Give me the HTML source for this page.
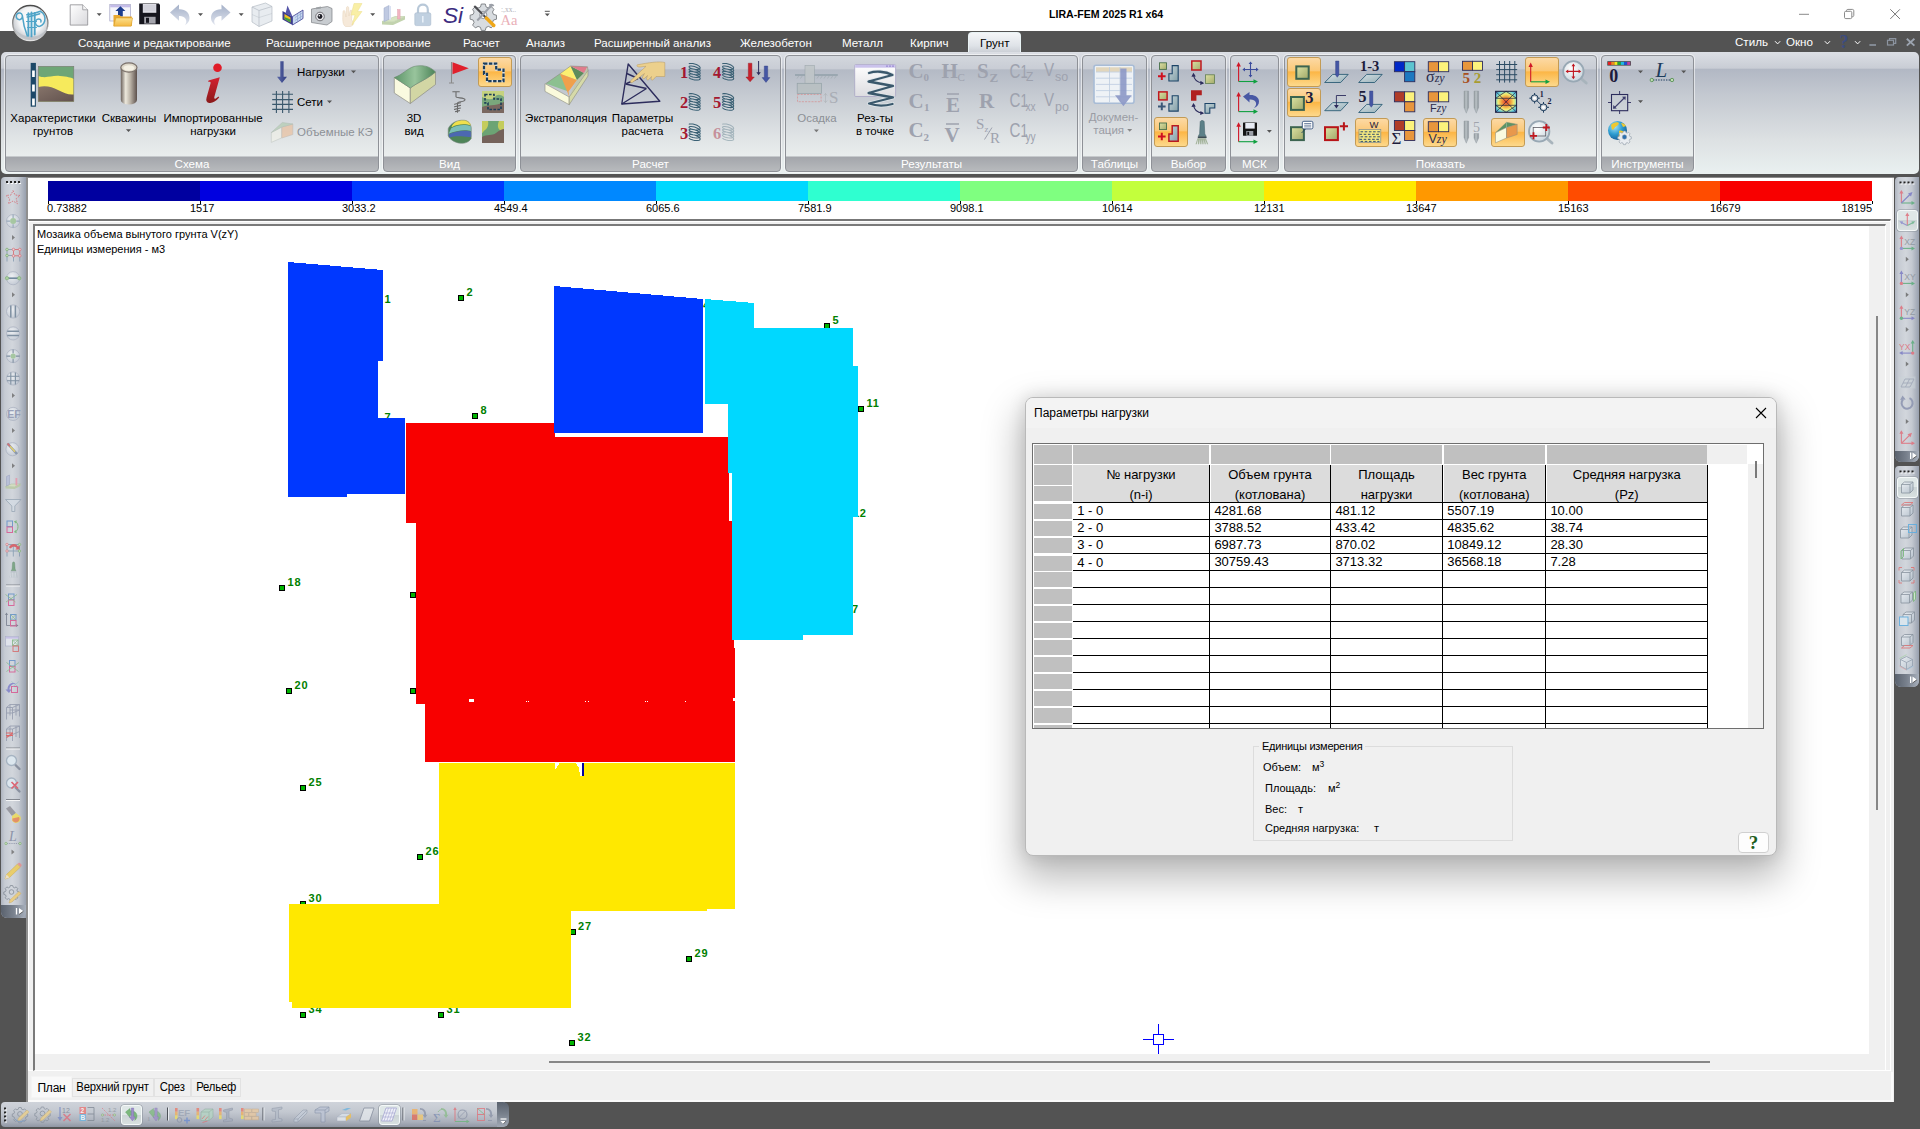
<!DOCTYPE html>
<html lang="ru">
<head>
<meta charset="utf-8">
<title>LIRA-FEM 2025 R1 x64</title>
<style>
*{box-sizing:border-box;margin:0;padding:0}
html,body{width:1920px;height:1129px;overflow:hidden;background:#535353}
body{position:relative;font-family:"Liberation Sans",sans-serif;font-size:12px;color:#000}
.abs{position:absolute}
/* title bar */
#titlebar{position:absolute;left:0;top:0;width:1920px;height:31px;background:#fff}
#apptitle{position:absolute;left:1049px;top:8px;width:116px;font:bold 10.6px "Liberation Sans",sans-serif;white-space:nowrap;letter-spacing:0}
/* menu */
#menubar{position:absolute;left:0;top:31px;width:1920px;height:22px;background:#535353}
.mt{position:absolute;top:5px;color:#fff;font-size:11.6px;white-space:nowrap;line-height:14px}
/* ribbon */
#ribbon{position:absolute;left:1px;top:52px;width:1918px;height:121.5px;border-radius:5px;background:linear-gradient(#dcdfe5 0,#c9cdd5 16px,#b2b8c4 17.5px,#c3c8d0 42px,#dde1e3 88px,#e9f0f0 121px);}
.grp{position:absolute;top:3px;height:117px;border:1px solid #8e9197;border-radius:4px;background:linear-gradient(#d3d7dd 0,#c9cdd5 12.500px,#b4bac5 14px,#c6cbd2 40px,#dfe3e5 80px,#e9eded 100px,#a3a6ab 101px,#b9bbbe 116px);box-shadow:0 0 0 1px rgba(255,255,255,.55)}
.grp .gl{position:absolute;left:0;right:0;bottom:0;height:15px;line-height:15px;text-align:center;color:#fff;font-size:11.6px}
.rt{position:absolute;font-size:11.5px;line-height:13px;text-align:center;white-space:nowrap;color:#000}
.rt.dis{color:#8c9096}
.act{position:absolute;border:1px solid #c39b55;border-radius:3px;background:linear-gradient(#fcd9a4 0,#fbc877 45%,#fcb646 50%,#fdd98c 100%)}
/* color scale */
#main{position:absolute;left:26px;top:177px;width:1868px;height:925px;background:#f0f0f0;border-left:2px solid #8f8f8f;border-top:1px solid #8a8a8a}
#scale{position:absolute;left:28px;top:178px;width:1864px;height:41px;background:#fff}
.sl{position:absolute;top:24px;font-size:11px;line-height:12px;white-space:nowrap}
/* canvas */
#canvas{position:absolute;left:35px;top:226px;width:1834px;height:828px;background:#fff;overflow:hidden}

#frame{position:absolute;left:28px;top:219px;width:1863px;height:852px;background:#f0f0f0;border-top:2px solid #777;border-left:1px solid #fff;border-right:1px solid #fff;border-bottom:1px solid #fff;box-shadow:inset 0 1px 0 0 #fff}
#frame2{position:absolute;left:33px;top:224px;width:1853px;height:847px;background:#f0f0f0;border-left:2px solid #7a7a7a;border-top:2px solid #7a7a7a;border-right:1px solid #fff;border-bottom:1px solid #fff}
#tabs{position:absolute;left:28px;top:1072px;width:1865px;height:30px;background:#f0f0f0;border-bottom:2px solid #fafafa;border-right:2px solid #fafafa}
.tab{position:absolute;top:6px;height:19px;border:1px solid #e2e2e2;font-size:12px;line-height:17px;padding:0 0;text-align:center;white-space:nowrap;letter-spacing:-0.2px}
.tab.sel{top:4px;height:22px;background:#f9f9f9;border-color:#f4f4f4;line-height:22px}
#ltool{position:absolute;left:1px;top:177px;width:25px;height:741px;border-radius:4px 0 0 6px;background:linear-gradient(90deg,#aeb4bf 0,#c6cbd3 15%,#d2d6dc 45%,#c4c9d1 70%,#98a0ae 100%)}
#btool{position:absolute;left:1px;top:1102px;width:507px;height:25px;border-radius:4px 6px 6px 4px;background:linear-gradient(#cfd3da 0,#c3c8d0 40%,#a9afba 80%,#8f96a3 100%)}
.rtool{position:absolute;left:1895px;width:24px;border-radius:4px 0 0 4px;background:linear-gradient(90deg,#aeb4bf 0,#c6cbd3 15%,#d2d6dc 45%,#c4c9d1 70%,#98a0ae 100%)}
.vscroll{position:absolute;left:1876px;top:316px;width:2px;height:494px;background:#868686}
.hscroll{position:absolute;left:549px;top:1061px;width:1161px;height:2px;background:#868686}
.grip{position:absolute;height:2px;background-image:repeating-linear-gradient(90deg,#222 0,#222 2px,transparent 2px,transparent 4px)}

#dlg{position:absolute;left:1025px;top:397px;width:752px;height:459px;border-radius:8px;background:#f0f0f0;border:1px solid #b9b9b9;box-shadow:0 18px 38px 5px rgba(0,0,0,.27),0 0 16px 2px rgba(0,0,0,.10);overflow:hidden}
#dlg .ttl{position:absolute;left:0;top:0;width:100%;height:30px;background:#f3f3f3}
#dlg .ttl span{position:absolute;left:8px;top:8px;font-size:12px;line-height:14px}
#grid{position:absolute;left:6px;top:45px;width:732px;height:286px;border:1px solid #6e6e6e;background:#fff;overflow:hidden}
#grid .c{position:absolute;background:#c0c0c0}
#grid .h{position:absolute;background:#dcdcdc;border-right:1px solid #000;font-size:13px;line-height:20px;text-align:center;white-space:nowrap;padding-top:0}
#grid .hl{position:absolute;background:#000;height:1px;left:40px;width:635px}
#grid .vl{position:absolute;background:#000;width:1px;top:58px;height:230px}
#grid .t{position:absolute;font-size:13px;line-height:15px;white-space:nowrap}
#gb{position:absolute;left:227px;top:348px;width:260px;height:95px;border:1px solid #dcdcdc}
#gb .cap{position:absolute;left:5px;top:-8px;background:#f0f0f0;padding:0 3px;font-size:11px;letter-spacing:-0.25px;line-height:14px;white-space:nowrap}
#gb .r{position:absolute;font-size:11px;line-height:14px;white-space:nowrap}
#gb sup{font-size:8.5px;line-height:0;vertical-align:4px}
#helpb{position:absolute;left:712px;top:434px;width:31px;height:21px;border:1px solid #d0d0d0;border-radius:4px;background:#fdfdfd;text-align:center;font:bold 19px/20px "Liberation Serif",serif;color:#1c5e1c}
.tab span{display:inline-block;transform:scaleX(.94);transform-origin:50% 50%}
</style>
</head>
<body>
<div id="titlebar">
  <div id="apptitle">LIRA-FEM 2025 R1 x64</div>
</div>
<div id="menubar">
  <div class="mt" style="left:78px">Создание и редактирование</div>
  <div class="mt" style="left:266px">Расширенное редактирование</div>
  <div class="mt" style="left:463px">Расчет</div>
  <div class="mt" style="left:526px">Анализ</div>
  <div class="mt" style="left:594px">Расширенный анализ</div>
  <div class="mt" style="left:740px">Железобетон</div>
  <div class="mt" style="left:842px">Металл</div>
  <div class="mt" style="left:910px">Кирпич</div>
  <div id="acttab" style="position:absolute;left:968px;top:1px;width:53px;height:22px;border-radius:4px 4px 0 0;background:linear-gradient(#f4f6f8,#dfe3e8 60%,#c6cad1);border:1px solid #e9f3f5;border-bottom:none"></div>
  <div class="mt" style="left:980px;color:#000">Грунт</div>
  <div class="mt" style="left:1735px;top:4px">Стиль</div>
  <div class="mt" style="left:1786px;top:4px">Окно</div>
</div>
<div id="ribbon">
  <div class="grp" style="left:4px;width:374px"><div class="gl">Схема</div></div>
  <div class="grp" style="left:382px;width:133px"><div class="gl">Вид</div></div>
  <div class="grp" style="left:519px;width:261px"><div class="gl">Расчет</div></div>
  <div class="grp" style="left:784px;width:293px"><div class="gl">Результаты</div></div>
  <div class="grp" style="left:1081px;width:65px"><div class="gl">Таблицы</div></div>
  <div class="grp" style="left:1150px;width:75px"><div class="gl">Выбор</div></div>
  <div class="grp" style="left:1229px;width:49px"><div class="gl">МСК</div></div>
  <div class="grp" style="left:1283px;width:313px"><div class="gl">Показать</div></div>
  <div class="grp" style="left:1600px;width:93px"><div class="gl">Инструменты</div></div>
</div>
<!--RIB1--><div id="ov" style="position:absolute;left:0;top:0;width:1920px;height:177px;pointer-events:none">
<!-- ===== Схема ===== -->
<div class="rt" style="left:10px;top:111.6px;width:86px;line-height:13px">Характеристики<br>грунтов</div>
<div class="rt" style="left:101px;top:111.6px;width:56px">Скважины</div>
<div class="rt" style="left:160px;top:111.6px;width:106px;line-height:13px">Импортированные<br>нагрузки</div>
<div class="rt" style="left:297px;top:65.5px;text-align:left">Нагрузки</div>
<div class="rt" style="left:297px;top:95.5px;text-align:left">Сети</div>
<div class="rt dis" style="left:297px;top:125.5px;text-align:left">Объемные КЭ</div>
<svg class="abs" style="left:0;top:52px" width="380" height="105" viewBox="0 52 380 105">
 <defs>
  <linearGradient id="gcyl" x1="0" x2="1"><stop offset="0" stop-color="#6c625c"/><stop offset=".3" stop-color="#ece8dc"/><stop offset=".6" stop-color="#b8b0a4"/><stop offset="1" stop-color="#5c504c"/></linearGradient>
  <linearGradient id="gbrown" x1="0" y1="0" x2="1" y2="1"><stop offset="0" stop-color="#86746a"/><stop offset="1" stop-color="#62524e"/></linearGradient>
  <linearGradient id="gred" x1="0" y1="0" x2="0" y2="1"><stop offset="0" stop-color="#d42030"/><stop offset="1" stop-color="#8a1a1a"/></linearGradient>
  <linearGradient id="garr" x1="0" x2="1"><stop offset="0" stop-color="#5a68a8"/><stop offset="1" stop-color="#303c80"/></linearGradient>
 </defs>
 <!-- soil characteristics -->
 <rect x="30.7" y="62.9" width="5.2" height="43.8" fill="#1c4868"/>
 <rect x="32.1" y="70.5" width="2.7" height="6.5" fill="#fff"/><rect x="32.1" y="84.5" width="2.7" height="7" fill="#fff"/><rect x="32.1" y="98.5" width="2.7" height="7" fill="#fff"/>
 <rect x="38.3" y="66.3" width="35.5" height="35.2" fill="#6ea676"/>
 <path d="M38.3 76 C46 79 52 75 60 76 S70 77 73.8 79 V101.5 H38.3Z" fill="#f6ea5c"/>
 <path d="M38.3 87 C46 85 52 87 58 90 S68 95 73.8 94.5 V101.5 H38.3Z" fill="url(#gbrown)"/>
 <rect x="38.3" y="66.3" width="35.5" height="35.2" fill="none" stroke="#7a7a72" stroke-width=".6"/>
 <!-- cylinder -->
 <path d="M120.8 67.5 V100 A8.1 4.6 0 0 0 137 100 V67.5Z" fill="url(#gcyl)"/>
 <ellipse cx="128.9" cy="67.5" rx="8.1" ry="4.6" fill="#dcd6c8" stroke="#7a706a" stroke-width="1.2"/>
 <ellipse cx="128.9" cy="68" rx="5.6" ry="2.8" fill="#f4f0e4"/>
 <path d="M125.9 129.3h5.2l-2.6 2.8z" fill="#555"/>
 <!-- i -->
 <circle cx="217.5" cy="67.7" r="4.3" fill="#e01c28"/>
 <path d="M208.5 80.5 L219.8 77.3 L214.3 97 Q213.8 99.3 215.8 98.5 L218.5 96.5 L219.2 97.6 Q214 103.6 209.3 103 Q205.3 102.3 206.6 97.4 L210.6 83.2 Q210.9 81.8 209.6 81.8 L208.3 81.9Z" fill="url(#gred)"/>
 <!-- loads arrow -->
 <path d="M280.3 61.2h3.3v15.6h3.4l-5 6.2l-5-6.2h3.3z" fill="url(#garr)"/>
 <path d="M351 70.6h5l-2.5 2.7z" fill="#555"/>
 <!-- grid -->
 <g stroke="#3a586c" stroke-width="1.1" fill="none"><path d="M276.4 91v22M282.6 91v22M288.9 91v22M272.2 94.2h20.8M272.2 99.6h20.8M272.2 104.4h20.8M272.2 109.4h20.8"/></g>
 <path d="M327 100.6h5l-2.5 2.7z" fill="#555"/>
 <!-- volume FE (disabled) -->
 <g opacity=".55"><path d="M271.3 132.5l10.5-5.5l0 10.8l-10.5 4.6z" fill="#f4f4e8" stroke="#a8b0a8" stroke-width=".6"/><path d="M281.8 127l11-3v10.5l-11 3.5z" fill="#eeb88c" stroke="#b0a090" stroke-width=".6"/><path d="M271.3 132.5l11-10l10.5 1.5l-11 3z" fill="#a8c8a4" stroke="#98a898" stroke-width=".6"/></g>
</svg>
<!-- ===== Вид ===== -->
<div class="rt" style="left:394px;top:111.6px;width:40px;line-height:13px">3D<br>вид</div>
<div class="act" style="left:478px;top:57px;width:34px;height:30px"></div>
<svg class="abs" style="left:380px;top:52px" width="140" height="105" viewBox="380 52 140 105">
 <defs>
  <linearGradient id="gtop" x1="0" y1="0" x2="1" y2="0"><stop offset="0" stop-color="#5c9468"/><stop offset=".5" stop-color="#98c49c"/><stop offset="1" stop-color="#4c8458"/></linearGradient>
 </defs>
 <!-- 3D block -->
 <path d="M394.3 77.5 L410.3 88 V103.5 L394.3 93Z" fill="#fafae0" stroke="#8c8c84" stroke-width=".7"/>
 <path d="M410.3 88 C418 82 426 80 435.5 72 V84.5 L410.3 103.5Z" fill="#d2d6a4" stroke="#8c8c84" stroke-width=".7"/>
 <path d="M394.3 77.5 C402 75 408 68 414 66.5 C422 64.5 430 66 435.5 72 C426 80 418 82 410.3 88Z" fill="url(#gtop)" stroke="#6c8c70" stroke-width=".6"/>
 <!-- flag -->
 <path d="M451.5 62v21" stroke="#8a8a8a" stroke-width="1.1"/><path d="M449 83h5" stroke="#8a8a8a" stroke-width="1"/>
 <path d="M452.5 62.3 L468.8 68.3 L452.5 74.3Z" fill="#e0202c"/>
 <!-- auger -->
 <g stroke="#6a6a6a" stroke-width="1.1" fill="none" stroke-linecap="round"><path d="M452.8 91.800h6.500M456 91.800v5c0 1.600 9 .4 9 3s-7.500 1.400-7.500 3.400v9"/><path d="M454.500 104.200l6-1.400M454.500 106.800l6-1.400M454.500 109.400l6-1.400M455.500 111.600l4-1"/></g>
 <!-- soil stack -->
 <g transform="translate(-19.800,-12.300)">
 <path d="M468 141 C470 136 476 132 484 132.500 C488 133 490.500 136 491 140 V151 C488 155 484 156 480 155.500 C474 155 469 151 468 148Z" fill="#4e8458"/>
 <path d="M471 140.500 C478 136.500 486 137 491 138.500 V143.500 C486 141.500 476 142.500 468.500 146Z" fill="#7cc0b8"/>
 <path d="M468.500 146.500 C476 143 486 142 491 144 V149 C486 150 478 147 469 150Z" fill="#4c68b0"/>
 <path d="M471.500 138.500 C474 134 478 132 484 132.300 C488 132.600 490.500 135 490.800 138 C486 136 478 136 471.500 139.500Z" fill="#f0e04c"/>
 <path d="M468 141 C470 136 476 132 484 132.500 C488 133 490.500 136 491 140 V151 C488 155 484 156 480 155.500 C474 155 469 151 468 148Z" fill="none" stroke="#7c8c84" stroke-width=".6"/>
 </g>
 <!-- contour active -->
 <path d="M484 63.600h12.200v6h7.300v11.600h-16.500v-7.300h-3z" fill="none" stroke="#d4dce4" stroke-width="2.200"/>
 <path d="M484 63.600h12.200v6h7.300v11.600h-16.500v-7.300h-3z" fill="none" stroke="#1c3c58" stroke-width="2.200" stroke-dasharray="3.400 1.500" stroke-linejoin="miter"/>
 <g transform="translate(0,-2)"><!-- contour on soil -->
 <rect x="482" y="93" width="22" height="22" fill="#7aa87c"/>
 <path d="M482 93h22v6c-4-3-7-3-9 0s-8 3-13 0z" fill="#d8dc80" opacity=".8"/>
 <path d="M482 109c6-3 12 0 22-5v11h-22z" fill="#7a6860"/>
 <g fill="none" stroke="#1c3c58" stroke-width="1.6" stroke-dasharray="2.6 1.4"><path d="M485 96.500h9v4.500h7v10.500h-13v-6.500h-3z"/></g>
 <!-- soil map -->
 <rect x="482" y="123" width="22" height="22" fill="#6ca474"/>
 <path d="M482 123h6c1 4-1 8-3 9s-2 3-3 3z" fill="#c4cc5c"/><path d="M504 123h-5c-2 4-1 8 1 9s3 2 4 2z" fill="#c4cc5c"/>
 <path d="M482 139c5-3 10-1 14-4s6-4 8-4v14h-22z" fill="#74625a"/>
</g>
</svg>
<!-- ===== Расчет ===== -->
<div class="rt" style="left:524px;top:111.6px;width:84px">Экстраполяция</div>
<div class="rt" style="left:611px;top:111.6px;width:63px;line-height:13px">Параметры<br>расчета</div>
<svg class="abs" style="left:518px;top:52px" width="264" height="105" viewBox="518 52 264 105">
 <!-- extrapolation -->
 <path d="M545 83.600L569.200 97V104.700L545 91.400Z" fill="#fafadc" stroke="#8c8c80" stroke-width=".6"/>
 <path d="M569.200 97L588 70.300V76L569.200 104.700Z" fill="#d6daa8" stroke="#8c8c80" stroke-width=".6"/>
 <path d="M545.800 83.600L560 73.800L568.500 91.400Z" fill="#8cc090"/>
 <path d="M560 73.800L570.500 66L577 80Z" fill="#fcf070"/>
 <path d="M560 73.800L577 80L568.500 91.400L569.200 96.500Z" fill="#f0a04c"/>
 <path d="M570.500 66L577 80L584 73Z" fill="#5c8c5c"/>
 <path d="M570.500 66L587.500 66.800L584 73Z" fill="#e07c8c"/>
 <path d="M577 80L584 73L587.500 66.800L588 70.300L569.200 97Z" fill="#c4cc94" opacity=".5"/>
 <path d="M545.800 83.600L560 73.800L570.500 66L587.500 66.800L588 70.300" fill="none" stroke="#8c8c80" stroke-width=".6"/>
 <!-- params: truss + hand -->
 <g fill="none" stroke="#2c2c5c" stroke-width="1.4" stroke-linejoin="round"><path d="M628.200 64L621.800 104L659.800 101.200Z"/><path d="M626.800 73.500L638 78.500M625.500 84L646.500 88.500M621.800 104L646.500 88.500M638 78.500L625.500 84"/></g>
 <path d="M664.800 62.500 C659 61 648 62.800 637.500 64.800 C636 65.800 637.500 67.200 640 67 L646 66.300 L630.500 80.800 C629.500 82.200 631.200 83.200 632.700 82.200 L644.500 73.500 L642.500 77 C642 78.600 644 79.300 645 78 L647.500 75.500 L646.500 78.500 C646.300 80 648.300 80.500 649.200 79.200 L651.500 76.500 L651 79 C651 80.300 652.800 80.500 653.600 79.300 L656 76.500 L664.800 76.500Z" fill="#ecd08c" stroke="#b8985c" stroke-width=".5"/>
 <!-- numbered springs -->
 <g font-family="Liberation Serif, serif" font-weight="bold" font-size="16.500" fill="#a41830">
  <text x="680" y="78">1</text><text x="680" y="108.200">2</text><text x="680" y="138.500">3</text>
  <text x="713" y="78">4</text><text x="713" y="108.200">5</text><text x="713" y="138.500" opacity=".4">6</text>
 </g>
 <g fill="none" stroke="#3a6074" stroke-width="1.05" stroke-linejoin="round">
  <g id="spr"><path d="M689.0 64.1 L689.3 63.6 L690.1 63.4 L691.3 63.4 L692.9 63.5 L694.6 64.0 L696.3 64.6 L697.9 65.3 L699.1 66.2 L699.9 67.1 L700.2 67.9 L699.9 68.6 L699.1 69.1 L697.9 69.4 L696.3 69.4 L694.6 69.3 L692.9 68.9 L691.3 68.5 L690.1 67.9 L689.3 67.3 L689.0 66.7 L689.3 66.3 L690.1 66.1 L691.3 66.0 L692.9 66.2 L694.6 66.6 L696.3 67.2 L697.9 68.0 L699.1 68.8 L699.9 69.7 L700.2 70.5 L699.9 71.2 L699.1 71.7 L697.9 72.0 L696.3 72.1 L694.6 72.0 L692.9 71.6 L691.3 71.1 L690.1 70.5 L689.3 69.9 L689.0 69.4 L689.3 69.0 L690.1 68.7 L691.3 68.7 L692.9 68.9 L694.6 69.3 L696.3 69.9 L697.9 70.7 L699.1 71.5 L699.9 72.4 L700.2 73.2 L699.9 73.9 L699.1 74.4 L697.9 74.7 L696.3 74.8 L694.6 74.6 L692.9 74.3 L691.3 73.8 L690.1 73.2 L689.3 72.6 L689.0 72.0 L689.3 71.6 L690.1 71.4 L691.3 71.3 L692.9 71.5 L694.6 71.9 L696.3 72.6 L697.9 73.3 L699.1 74.2 L699.9 75.0 L700.2 75.8 L699.9 76.5 L699.1 77.0 L697.9 77.4 L696.3 77.4 L694.6 77.3 L692.9 76.9 L691.3 76.4 L690.1 75.9 L689.3 75.3 L689.0 74.7 L689.3 74.3 L690.1 74.0 L691.3 74.0 L692.9 74.2 L694.6 74.6 L696.3 75.2 L697.9 76.0 L699.1 76.8 L699.9 77.7 L700.2 78.5 L699.9 79.2 L699.1 79.7 L697.9 80.0 L696.3 80.1 L694.6 79.9 L692.9 79.6 L691.3 79.1 L690.1 78.5 L689.3 77.9 L689.0 77.4"/></g>
  <use href="#spr" y="30.200"/><use href="#spr" y="60.500"/><use href="#spr" x="33.500"/><use href="#spr" x="33.500" y="30.200"/><use href="#spr" x="33.500" y="60.500" opacity=".35"/>
 </g>
 <!-- arrows -->
 <path d="M748.300 63.200h3.600v13.800h2.400l-4.200 4.800l-4.200-4.800h2.400z" fill="#c8202c" stroke="#901820" stroke-width=".4"/>
 <path d="M758.600 61v12" stroke="#2c2c5c" stroke-width="1"/><path d="M756.400 72.300h4.400l-2.200 3z" fill="#2c2c5c"/>
 <path d="M764.300 66h3.400v11.600h2.200l-3.900 4.800l-3.900-4.800h2.200z" fill="#4456a4" stroke="#303c80" stroke-width=".4"/>
</svg>
</div>
<!--/RIB1-->
<!--RIB2--><div id="ov2" style="position:absolute;left:0;top:0;width:1920px;height:177px;pointer-events:none">
<!-- ===== Результаты ===== -->
<div class="rt dis" style="left:797px;top:111.6px;width:40px">Осадка</div>
<div class="rt" style="left:853px;top:111.6px;width:44px">Рез-ты<br>в точке</div>
<svg class="abs" style="left:782px;top:52px" width="298" height="105" viewBox="782 52 298 105">
 <defs>
  <linearGradient id="gwin" x1="0" y1="0" x2="0" y2="1"><stop offset="0" stop-color="#ffffff"/><stop offset="1" stop-color="#dcdce0"/></linearGradient>
 </defs>
 <!-- settlement (disabled) -->
 <g opacity=".85">
 <rect x="805" y="65.300" width="9.400" height="18" fill="#c0c6c8" stroke="#98a4a8" stroke-width=".6"/>
 <path d="M795 75h10M814.400 75h23.400" stroke="#8c9ca4" stroke-width="1.300"/>
 <path d="M797 78.500l2-3M800.500 78.500l2-3M817 78.500l2-3M820.500 78.500l2-3M824 78.500l2-3M827.500 78.500l2-3M831 78.500l2-3M834.500 78.500l2-3" stroke="#98a4a8" stroke-width=".6"/>
 <rect x="797.200" y="83.300" width="24.200" height="10.100" fill="#b8c0c2" stroke="#8c9ca0" stroke-width=".7"/>
 <rect x="797.500" y="94.500" width="23.600" height="7.200" fill="none" stroke="#d88c8c" stroke-width=".8" stroke-dasharray="2 1.200"/>
 <path d="M825.500 93.500v9M823.800 95.500l1.700-2l1.700 2M823.800 100.500l1.700 2l1.700-2" stroke="#a8acb0" stroke-width=".6" fill="none"/>
 <text x="829" y="102.800" font-family="Liberation Serif, serif" font-size="17" fill="#a4a8b0">S</text>
 </g>
 <path d="M813.900 129.600h5l-2.500 2.700z" fill="#777"/>
 <!-- results at point -->
 <rect x="854.700" y="64.500" width="40.900" height="32" rx="1" fill="url(#gwin)" stroke="#a8a4c4" stroke-width=".8"/>
 <rect x="855.100" y="64.900" width="40.100" height="2.800" fill="#cac2ec"/>
 <path d="M886 66.200h2M889 66.200h2M892 66.200h2" stroke="#9c8cd4" stroke-width="1.200"/>
 <g fill="none" stroke="#dfe6ea" stroke-width="3.800" stroke-linejoin="round" stroke-linecap="round"><path d="M869 73c6-2 16-2 23.500 2l-24 6.500l24.500 4.500l-24.500 7l24.500 4.500l-24 6c7 2.500 16 2.500 23.500 .5"/></g>
 <g fill="none" stroke="#3a586c" stroke-width="2.300" stroke-linejoin="round" stroke-linecap="round"><path d="M869 73c6-2 16-2 23.500 2l-24 6.500l24.500 4.500l-24.500 7l24.500 4.500l-24 6c7 2.500 16 2.500 23.500 .5"/></g>
 <!-- disabled symbols -->
 <g font-family="Liberation Serif, serif" fill="#9ea2ae">
  <g font-weight="bold" font-size="21">
   <text x="908.500" y="77.800">C</text><text x="908.500" y="107.500">C</text><text x="908.500" y="137.200">C</text>
   <text x="941.500" y="77.800">H</text><text x="946" y="111.500">E</text><text x="944.500" y="141.500">V</text>
   <text x="977" y="77.800">S</text><text x="979" y="107.500">R</text>
  </g>
  <g font-weight="bold" font-size="11"><text x="923.500" y="81">0</text><text x="924" y="110.500">1</text><text x="923.500" y="140.500">2</text><text x="957.500" y="81" font-weight="normal">C</text><text x="989.500" y="81.500" font-size="13">Z</text></g>
  <path d="M947 94h12M946 124h13" stroke="#9ea2ae" stroke-width="1.600"/>
  <g font-size="15"><text x="976" y="129">S</text><text x="984.500" y="131.500" font-size="9">z</text><text x="990" y="142.500">R</text></g>
  <path d="M984.500 139.500l7.500-12" stroke="#9ea2ae" stroke-width="1"/>
  <g font-size="21" font-family="Liberation Sans, sans-serif" transform="translate(1009.500 0) scale(.72 1)"><text x="0" y="77.800">C</text><text x="0" y="107.500">C</text><text x="0" y="137.200">C</text></g>
  <g font-size="19" font-family="Liberation Sans, sans-serif" transform="translate(1020.500 0) scale(.7 1)"><text x="0" y="77.800">1</text><text x="0" y="107.500">1</text><text x="0" y="137.200">1</text></g>
  <g font-size="12" font-family="Liberation Sans, sans-serif"><text x="1026" y="81">Z</text><text x="1025.500" y="111" transform="translate(1025.500 0) scale(.85 1) translate(-1025.500 0)">xx</text><text x="1025.500" y="141" transform="translate(1025.500 0) scale(.85 1) translate(-1025.500 0)">yy</text></g>
  <g font-size="19" font-family="Liberation Sans, sans-serif" transform="translate(1044 0) scale(.8 1)"><text x="0" y="76.500">V</text><text x="0" y="106">V</text></g>
  <g font-size="12.500" font-family="Liberation Sans, sans-serif"><text x="1055" y="80.500">so</text><text x="1055" y="110.500">po</text></g>
 </g>
</svg>
<!-- ===== Таблицы ===== -->
<div class="rt dis" style="left:1085px;top:111px;width:57px;line-height:12.5px;color:#9a9ca4">Докумен-<br>тация&nbsp;&nbsp;&nbsp;</div>
<svg class="abs" style="left:1080px;top:52px" width="70" height="105" viewBox="1080 52 70 105">
 <rect x="1094" y="65.200" width="40" height="38" rx="2" fill="#eef2f6" stroke="#a8bcd6" stroke-width="1.600"/>
 <rect x="1096" y="67.300" width="36" height="4.600" fill="#e2d6bc"/>
 <g stroke="#bccce0" stroke-width=".8"><path d="M1096 72h36M1096 78.200h36M1096 84.400h36M1096 90.600h36M1096 96.800h36M1109.500 67v35M1120 67v35"/></g>
 <path d="M1120.300 68.500h6.200v26.700h5.300l-8.400 11l-8.400-11h5.300z" fill="#8c98c6" opacity=".9"/>
 <path d="M1127.200 129h5l-2.500 2.700z" fill="#888"/>
</svg>
<!-- ===== Выбор ===== -->
<div class="act" style="left:1154px;top:117px;width:34px;height:30px"></div>
<svg class="abs" style="left:1150px;top:52px" width="78" height="105" viewBox="1150 52 78 105">
 <defs>
  <linearGradient id="gsq" x1="0" y1="0" x2="1" y2="1"><stop offset="0" stop-color="#dce0a4"/><stop offset="1" stop-color="#a4ac6c"/></linearGradient>
  <linearGradient id="gL" x1="0" y1="0" x2="1" y2="1"><stop offset="0" stop-color="#c4d4d8"/><stop offset="1" stop-color="#84a0a8"/></linearGradient>
  <g id="Lsh"><path d="M1172.200 65.600h6v15.400h-9.300v-7.200h3.300z"/></g>
  <g id="plus"><path d="M1158 76.300h7.600M1161.800 72.500v7.600" fill="none" stroke-width="2"/></g>
  <g id="darr"><path d="M1193.500 74.500c.5 5 4 8 9 8.500" fill="none" stroke="#2c2c5c" stroke-width="1.100"/><path d="M1191.400 76.800l2-4l2.400 3.700zM1200.400 80.800l3.800 2.400l-4 1.800z" fill="#2c2c5c"/></g>
 </defs>
 <!-- r1c1 -->
 <rect x="1159.500" y="62.800" width="7" height="6.600" fill="url(#gsq)" stroke="#48704c" stroke-width=".9"/>
 <use href="#plus" stroke="#d01020"/>
 <use href="#Lsh" fill="url(#gL)" stroke="#1c4468" stroke-width="1.100"/>
 <!-- r2c1 -->
 <rect x="1158.700" y="91.900" width="8.400" height="8" fill="url(#gsq)" stroke="#c01820" stroke-width="1.500"/>
 <use href="#plus" y="30.100" stroke="#3c5878"/>
 <use href="#Lsh" y="30.100" fill="url(#gL)" stroke="#1c4468" stroke-width="1.100"/>
 <!-- r3c1 -->
 <rect x="1159.500" y="123" width="7" height="6.600" fill="url(#gsq)" stroke="#48704c" stroke-width=".9"/>
 <use href="#plus" y="60.200" stroke="#d01020"/>
 <use href="#Lsh" y="60.200" fill="url(#gL)" stroke="#b81820" stroke-width="1.500"/>
 <!-- r1c2 -->
 <rect x="1191.800" y="61" width="9.200" height="9" fill="url(#gsq)" stroke="#c01820" stroke-width="1.500"/>
 <use href="#darr"/>
 <rect x="1205.400" y="74.800" width="9.200" height="8.600" fill="url(#gsq)" stroke="#607c50" stroke-width=".8"/>
 <!-- r2c2 -->
 <path d="M1191 90.300h10.800v5h-5.400v5.400h-5.400z" fill="#b02020"/>
 <use href="#darr" y="30.100"/>
 <path d="M1205 103.500h9.800v4.500h-5v5.200h-4.800z" fill="url(#gL)" stroke="#1c4468" stroke-width="1.100"/>
 <!-- brush -->
 <path d="M1200.200 122c0-2 4-2 4 0l.6 11.500c0 1 1.200 1.500 1.200 3h-7.600c0-1.500 1.200-2 1.200-3z" fill="#5c8088" stroke="#3c5c64" stroke-width=".5"/>
 <rect x="1197.800" y="136.500" width="8.800" height="1.600" fill="#3c4c54"/>
 <path d="M1197.500 138.200l-2 6h1.200l1.400-5l-.2 5h1.200l.8-5l.3 5h1.200l.3-5l.7 5h1.200l-.2-5l1.300 5h1.200l-.9-5l2 5h1.200l-2.300-6z" fill="#a4b49c"/>
</svg>
<!-- ===== МСК ===== -->
<svg class="abs" style="left:1229px;top:52px" width="52" height="105" viewBox="1229 52 52 105">
 <defs>
  <g id="axs"><path d="M1238.600 81.500v-17" stroke="#d01828" stroke-width="1.100" fill="none"/><path d="M1236.300 66.500l2.300-4.500l2.300 4.500z" fill="#d01828"/><path d="M1238.600 81.500h16" stroke="#10a040" stroke-width="1.100" fill="none"/><path d="M1253.500 79.200l4.500 2.300l-4.500 2.300z" fill="#10a040"/></g>
 </defs>
 <use href="#axs"/><use href="#axs" y="30.100"/><use href="#axs" y="60.200"/>
 <g stroke="#3c4c9c" stroke-width="1.100" fill="#3c4c9c"><path d="M1243.500 69.500h14M1250.500 62.500v14" fill="none"/><path d="M1245 67.600l-2.600 1.900l2.600 1.900zM1256 67.600l2.600 1.900l-2.600 1.900zM1248.600 64l1.900-2.600l1.900 2.600zM1248.600 75l1.900 2.600l1.900-2.600z" stroke="none"/></g>
 <path d="M1243 96.500l6.500-4.500v3c5-.5 9.500 2 9.500 6.500c0 3-2 5.500-5 6.500c2-2 2.600-4 1.800-5.800c-1-2.200-3.500-3-6.300-2.700v3z" fill="#4858a4"/>
 <rect x="1243" y="122.500" width="14" height="13.300" rx=".6" fill="#141414"/><rect x="1245.300" y="123" width="9.400" height="5.600" fill="#e8ecf4"/><rect x="1246.300" y="131" width="7" height="4.800" fill="#9ca0a8"/><rect x="1247.300" y="131.800" width="1.800" height="3.200" fill="#141414"/>
 <path d="M1266.900 130h5l-2.500 2.700z" fill="#555"/>
</svg>
</div>
<!--/RIB2-->
<!--RIB3--><div id="ov3" style="position:absolute;left:0;top:0;width:1920px;height:177px;pointer-events:none">
<!-- ===== Показать ===== -->
<div class="act" style="left:1287px;top:57px;width:34px;height:29.500px"></div>
<div class="act" style="left:1287px;top:87.500px;width:34px;height:29.500px"></div>
<div class="act" style="left:1355px;top:117.500px;width:34px;height:29.500px"></div>
<div class="act" style="left:1423px;top:117.500px;width:34px;height:29.500px"></div>
<div class="act" style="left:1491px;top:117.500px;width:34px;height:29.500px"></div>
<div class="act" style="left:1525px;top:57px;width:34px;height:29.500px"></div>
<svg class="abs" style="left:1282px;top:52px" width="316" height="105" viewBox="1282 52 316 105">
 <defs>
  <linearGradient id="gsq2" x1="0" y1="0" x2="1" y2="1"><stop offset="0" stop-color="#dce2a4"/><stop offset="1" stop-color="#a0a868"/></linearGradient>
  <linearGradient id="gpl" x1="0" y1="0" x2="1" y2="1"><stop offset="0" stop-color="#d4e0e4"/><stop offset="1" stop-color="#98b0b8"/></linearGradient>
  <linearGradient id="gpile" x1="0" x2="1"><stop offset="0" stop-color="#8a9297"/><stop offset=".45" stop-color="#bcc4c8"/><stop offset="1" stop-color="#868e94"/></linearGradient>
  <radialGradient id="gmos" cx=".5" cy=".5" r=".75"><stop offset="0" stop-color="#e83c2c"/><stop offset=".3" stop-color="#f0a040"/><stop offset=".5" stop-color="#f4ec70"/><stop offset=".7" stop-color="#6cd4d8"/><stop offset="1" stop-color="#2858c0"/></radialGradient>
  <radialGradient id="glens" cx=".4" cy=".35" r=".7"><stop offset="0" stop-color="#ffffff"/><stop offset="1" stop-color="#c8d4dc"/></radialGradient>
  <g id="plate"><path d="M1324.700 82.500l8-8.100h15.500l-7.500 8.100z" fill="url(#gpl)" stroke="#1c506c" stroke-width=".8"/></g>
  <g id="barrow"><path d="M1335.600 61h3.300v14l-1.650 2.300l-1.650-2.300z" fill="#4456a4" stroke="#303c80" stroke-width=".4"/></g>
  <g id="sq2"><rect x="1428.300" y="61.700" width="10.200" height="10" fill="#e8963c" stroke="#2c2c5c" stroke-width=".9"/><rect x="1438.500" y="61.700" width="10.200" height="10" fill="#fcf27c" stroke="#2c2c5c" stroke-width=".9"/></g>
  <g id="pile"><path d="M0 0h4.600v16.500l-2.300 5.700l-2.300-5.700z" fill="url(#gpile)" stroke="#98a0a6" stroke-width=".5"/></g>
 </defs>
 <!-- col1 -->
 <rect x="1296.300" y="66.400" width="12.400" height="12.400" fill="url(#gsq2)" stroke="#3c6450" stroke-width="2"/>
 <rect x="1291" y="97" width="12.900" height="12.900" fill="url(#gsq2)" stroke="#3c6450" stroke-width="2"/>
 <text x="1305.300" y="102.700" font-family="Liberation Serif, serif" font-weight="bold" font-size="16.500" fill="#1c1c3c">3</text>
 <rect x="1291" y="127.200" width="12.900" height="12.900" fill="url(#gsq2)" stroke="#3c6450" stroke-width="2"/>
 <path d="M1301.500 133l4-4" stroke="#1c3c5c" stroke-width=".8"/>
 <rect x="1302.300" y="121.300" width="10.600" height="7.600" rx="1.500" fill="#fff" stroke="#1c3c6c" stroke-width=".8"/>
 <path d="M1304.200 123.500h7M1304.200 125.200h7M1304.200 126.900h7" stroke="#1c3c6c" stroke-width=".6"/>
 <!-- col2 -->
 <use href="#plate"/><use href="#barrow"/>
 <use href="#plate" y="28.200"/>
 <path d="M1346 95.500h-9.600v11" fill="none" stroke="#2c2c5c" stroke-width=".9"/><path d="M1334 105l2.400 3.500l2.400-3.500z" fill="#2c2c5c"/>
 <rect x="1325" y="127.200" width="12.900" height="12.900" fill="url(#gsq2)" stroke="#b81418" stroke-width="2"/>
 <path d="M1339.800 126.300h8.200M1343.900 122.300v8.200" stroke="#b81418" stroke-width="2"/>
 <!-- col3 -->
 <use href="#plate" x="34"/>
 <text x="1360" y="71.200" font-family="Liberation Serif, serif" font-weight="bold" font-size="14.500" fill="#1c1c3c">1-3</text>
 <use href="#plate" x="34" y="30"/><use href="#barrow" x="34" y="30"/>
 <text x="1358.500" y="101.700" font-family="Liberation Serif, serif" font-weight="bold" font-size="16" fill="#1c1c3c">5</text>
 <text x="1369.600" y="127.800" font-family="Liberation Sans, sans-serif" font-size="9.500" fill="#1c1c3c">W</text>
 <rect x="1359" y="129.400" width="21.800" height="13" fill="#f4e880" stroke="#7c8c94" stroke-width=".7"/>
 <path d="M1360.500 131.800h20M1359.500 134.300h20M1360.500 136.800h20M1359.500 139.300h20M1360.500 141.400h19" stroke="#1c3c6c" stroke-width=".9" stroke-dasharray="2.600 1.600"/>
 <!-- col4 -->
 <g stroke="#2c2c5c" stroke-width=".9">
  <rect x="1394.400" y="61.700" width="10.200" height="10" fill="#0028c8"/><rect x="1404.600" y="61.700" width="10.200" height="10" fill="#5cc4d0"/><rect x="1404.600" y="71.700" width="10.200" height="10" fill="#1c78c0"/>
  <rect x="1394.400" y="91.800" width="10.200" height="10" fill="#b03c28"/><rect x="1404.600" y="91.800" width="10.200" height="10" fill="#fcf27c"/><rect x="1404.600" y="101.800" width="10.200" height="10" fill="#e8963c"/>
  <rect x="1394.400" y="120.500" width="10.200" height="10" fill="#b03c28"/><rect x="1404.600" y="120.500" width="10.200" height="10" fill="#fcf27c"/><rect x="1404.600" y="130.500" width="10.200" height="10" fill="#e8963c"/>
 </g>
 <text x="1391.500" y="143.500" font-family="Liberation Serif, serif" font-size="17" fill="#1c1c3c">Σ</text>
 <!-- col5 -->
 <use href="#sq2"/><use href="#sq2" y="30.100"/><use href="#sq2" y="60"/>
 <g fill="#2c2c4c"><text x="1426" y="82" font-family="Liberation Serif, serif" font-size="16">σ<tspan font-style="italic" font-size="12">zy</tspan></text>
 <text x="1430" y="111.500" font-family="Liberation Sans, sans-serif" font-size="11">F<tspan font-family="Liberation Serif, serif" font-style="italic" font-size="11.500">zy</tspan></text>
 <text x="1428.500" y="143" font-family="Liberation Sans, sans-serif" font-size="12.500">V<tspan font-family="Liberation Serif, serif" font-style="italic" font-size="12">zy</tspan></text></g>
 <!-- col6 -->
 <rect x="1462.500" y="61.300" width="10" height="9" fill="#e8963c" stroke="#2c2c5c" stroke-width=".9"/><rect x="1472.500" y="61.300" width="10" height="9" fill="#fcf27c" stroke="#2c2c5c" stroke-width=".9"/>
 <text x="1462.500" y="82.600" font-family="Liberation Serif, serif" font-weight="bold" font-size="15" fill="#a85020">5</text><text x="1473.800" y="82.600" font-family="Liberation Serif, serif" font-weight="bold" font-size="15" fill="#a89c30">2</text>
 <use href="#pile" x="1464" y="91"/><use href="#pile" x="1474" y="91"/>
 <use href="#pile" x="1464" y="121"/>
 <text x="1473" y="131.700" font-family="Liberation Serif, serif" font-size="14" fill="#a0a4ac">5</text>
 <path d="M1474 133.500h4.600v4.500l-2.300 5.200l-2.300-5.200z" fill="url(#gpile)" stroke="#98a0a6" stroke-width=".5"/>
 <!-- col7 -->
 <g stroke="#2c4c64" stroke-width="1" fill="none"><path d="M1499.500 61v21.600M1504.600 61v21.600M1509.700 61v21.600M1514.800 61v21.600M1496.200 64.500h21M1496.200 69.600h21M1496.200 74.700h21M1496.200 79.800h21"/></g>
 <rect x="1495.600" y="91.300" width="21" height="21" fill="url(#gmos)" stroke="#1c1c3c" stroke-width="1"/>
 <path d="M1495.600 91.300l21 21M1516.600 91.300l-21 21M1495.600 98.300h21M1495.600 105.300h21M1495.600 98.300l10.500-7l10.500 7M1495.600 105.300l10.500 7l10.500-7" fill="none" stroke="#1c1c3c" stroke-width=".7"/>
 <path d="M1495.500 132.800l11-10.500l10.700 2l-10.700 3.200z" fill="#5c9464" stroke="#7c8c7c" stroke-width=".4"/>
 <path d="M1495.500 132.800l11-5.300v10.500l-11 4.800z" fill="#fafae0" stroke="#8c8c80" stroke-width=".5"/>
 <path d="M1506.500 127.500l10.700-3.200v10.200l-10.700 3.500z" fill="#e8984c" stroke="#8c8c80" stroke-width=".5"/>
 <path d="M1506.500 122.300v5.200" stroke="#a8c0a8" stroke-width=".6"/>
 <!-- col8 -->
 <path d="M1530.700 82v-17" stroke="#d01828" stroke-width="1.100"/><path d="M1528.500 67l2.200-4.500l2.200 4.500z" fill="#d01828"/>
 <path d="M1530.700 81.800h16" stroke="#10a040" stroke-width="1.100"/><path d="M1545.500 79.600l4.500 2.200l-4.500 2.200z" fill="#10a040"/>
 <g fill="none" stroke="#1c3c5c" stroke-width="1"><circle cx="1534.600" cy="98.200" r="3.400"/><circle cx="1543.500" cy="107.300" r="3.400"/><path d="M1534.600 93v2M1534.600 101.500v2M1529.400 98.200h2M1537.800 98.200h2M1543.500 102v2M1543.500 110.500v2.200M1538.200 107.300h2M1546.800 107.300h2.200M1536.800 100.500l4.500 4.600"/></g>
 <circle cx="1534.600" cy="98.200" r="1.600" fill="#fff"/><circle cx="1543.500" cy="107.300" r="1.600" fill="#fff"/>
 <text x="1539.800" y="96.500" font-family="Liberation Serif, serif" font-weight="bold" font-size="8" fill="#1c1c3c">1</text><text x="1547.500" y="104" font-family="Liberation Serif, serif" font-weight="bold" font-size="8" fill="#1c1c3c">2</text>
 <g id="mag"><path d="M1547.500 139l4.500 4" stroke="#a8b4bc" stroke-width="3" stroke-linecap="round"/><circle cx="1539.200" cy="131.400" r="10.200" fill="url(#glens)" stroke="#98a8b4" stroke-width="1.800"/></g>
 <rect x="1533.200" y="127.500" width="12.500" height="8.500" fill="none" stroke="#5c5c64" stroke-width=".8"/>
 <path d="M1542.800 127.500h7M1546.300 124v7M1530 135.800h7M1533.500 132.300v7" stroke="#c01820" stroke-width="1.800"/>
 <!-- col9 -->
 <use href="#mag" x="34.200" y="-60"/>
 <g stroke="#c01820" stroke-width="1.100" fill="#c01820"><path d="M1566.800 71.400h13.200M1573.400 64.800v13.200" fill="none"/><path d="M1568.200 69.500l-2.600 1.900l2.600 1.900zM1578.600 69.500l2.600 1.900l-2.600 1.900zM1571.500 66.200l1.900-2.600l1.900 2.600zM1571.500 76.600l1.900 2.600l1.900-2.600z" stroke="none"/></g>
</svg>
<!-- ===== Инструменты ===== -->
<svg class="abs" style="left:1600px;top:52px" width="96" height="105" viewBox="1600 52 96 105">
 <defs><radialGradient id="gglobe" cx=".35" cy=".3" r=".8"><stop offset="0" stop-color="#a8e4f4"/><stop offset=".5" stop-color="#2c9cd0"/><stop offset="1" stop-color="#14508c"/></radialGradient></defs>
 <rect x="1607.300" y="61.200" width="23.600" height="4.400" fill="#444"/>
 <rect x="1608" y="61.900" width="3.200" height="3" fill="#e82020"/><rect x="1611.200" y="61.900" width="3.200" height="3" fill="#f08820"/><rect x="1614.400" y="61.900" width="3.200" height="3" fill="#f4e820"/><rect x="1617.600" y="61.900" width="3.200" height="3" fill="#20a830"/><rect x="1620.800" y="61.900" width="3.200" height="3" fill="#20b8e0"/><rect x="1624" y="61.900" width="3.200" height="3" fill="#2050d0"/><rect x="1627.200" y="61.900" width="3" height="3" fill="#c040a0"/>
 <text x="1609.300" y="82" font-family="Liberation Serif, serif" font-weight="bold" font-size="18" fill="#1c1c3c">0</text>
 <path d="M1638 70.600h5l-2.500 2.700zM1681.200 70.600h5l-2.500 2.700zM1638 100.300h5l-2.500 2.700z" fill="#555"/>
 <text x="1655.500" y="76.700" font-family="Liberation Serif, serif" font-style="italic" font-size="21" fill="#1c3c5c">L</text>
 <path d="M1653 80h18" stroke="#1c3c5c" stroke-width="1" stroke-dasharray="1.400 1.200"/><circle cx="1651.800" cy="80" r="1.700" fill="#c4dcb4" stroke="#4c8c4c" stroke-width=".8"/><circle cx="1672" cy="80" r="1.700" fill="#c4dcb4" stroke="#4c8c4c" stroke-width=".8"/>
 <rect x="1611.500" y="94.500" width="16.200" height="16.200" fill="none" stroke="#2c2c5c" stroke-width="1.100"/>
 <path d="M1619.600 91v3.500M1619.600 110.700v3.300M1608 102.500h3.500M1627.700 102.500h3.300" stroke="#2c2c5c" stroke-width=".9"/>
 <path d="M1615 107.200l9.200-9.200" stroke="#3c3c6c" stroke-width="1.200"/><path d="M1622 96.800l3.800-.4l-.4 3.800zM1613.400 105l-.4 3.800l3.800-.4z" fill="#3c3c6c"/>
 <circle cx="1617.500" cy="130.500" r="9.500" fill="url(#gglobe)"/>
 <path d="M1611 125c2-2 5-3 7-2.500s0 3 -2 4s-2 4 -4 3zM1619 131c2-1 5 0 5 2s-2 4-3 6s-3-3-2-5zM1621 123c2 0 4 1 5 3l-3 1z" fill="#f0c830"/>
 <g transform="translate(1624.500,137) scale(.85)"><path d="M-1.200-7h2.400l.5 1.800l1.500.6l1.600-.9l1.700 1.700l-.9 1.600l.6 1.500l1.800.5v2.400l-1.800.5l-.6 1.500l.9 1.600l-1.700 1.700l-1.600-.9l-1.500.6l-.5 1.800h-2.400l-.5-1.800l-1.500-.6l-1.600.9l-1.700-1.700l.9-1.600l-.6-1.500l-1.800-.5v-2.400l1.800-.5l.6-1.500l-.9-1.600l1.700-1.700l1.600.9l1.500-.6z" fill="#e8ecf0" stroke="#8c98a4" stroke-width=".7"/><circle r="2.600" fill="#2c70b0" stroke="#8c98a4" stroke-width=".6"/></g>
</svg>
</div>
<!--/RIB3-->
<!--TITLE--><svg class="abs" style="left:0;top:0;z-index:5" width="1920" height="54" viewBox="0 0 1920 54">
 <defs>
  <linearGradient id="gorb" x1="0" y1="0" x2="0" y2="1"><stop offset="0" stop-color="#fdfdfd"/><stop offset=".45" stop-color="#d8dce0"/><stop offset=".55" stop-color="#b4b8c0"/><stop offset="1" stop-color="#e8ecf0"/></linearGradient>
  <radialGradient id="gorb2" cx=".52" cy=".42" r=".62"><stop offset="0" stop-color="#ffffff"/><stop offset=".55" stop-color="#f4f5f6"/><stop offset="1" stop-color="#b4b8be"/></radialGradient><linearGradient id="grim2" x1="0" y1="0" x2="0" y2="1"><stop offset="0" stop-color="#4a4a4a"/><stop offset=".55" stop-color="#8c8c8c"/><stop offset="1" stop-color="#e4e4e4"/></linearGradient><linearGradient id="grim" x1="0" y1="0" x2="0" y2="1"><stop offset="0" stop-color="#e4e6ea"/><stop offset="1" stop-color="#7c8088"/></linearGradient>
  <linearGradient id="gdoc" x1="0" y1="0" x2="1" y2="1"><stop offset="0" stop-color="#ffffff"/><stop offset="1" stop-color="#d8d8dc"/></linearGradient>
  <linearGradient id="gundo" x1="0" y1="0" x2="0" y2="1"><stop offset="0" stop-color="#a4b0c8"/><stop offset="1" stop-color="#e0e4ee"/></linearGradient>
  <linearGradient id="gfold" x1="0" y1="0" x2="0" y2="1"><stop offset="0" stop-color="#fce08c"/><stop offset="1" stop-color="#f4b840"/></linearGradient>
 </defs>
 <!-- orb -->
 <circle cx="30.300" cy="23.100" r="17.600" fill="url(#gorb2)" stroke="url(#grim2)" stroke-width="1.300"/>
 <path d="M14 27c3 9 12 13.500 20 12.500s13-7 14.500-14c-4 8-10 11-17 11s-14-3-17.500-9.500z" fill="#b9bdc3" opacity=".75"/>
 <g fill="none" stroke="#4fa4c8" stroke-width="1.500" stroke-linecap="round" stroke-linejoin="round"><path d="M22.300 15.400c-.6-2.600-3.800-3.200-5.300-1.400s-.8 5.200 1.800 5.600s3.800-1.800 3.500-4.200c.8 7.500 2.600 14.500 5 20.500"/><path d="M26.800 14.800c4.800-.6 9.200-1.800 13.800-3.500M27.200 17c4.500-.8 8.500-1.800 12.500-3.200"/><path d="M28.400 13.200v22.600M31.500 12.400v24M34.700 13v21.500" stroke-width="1.900"/><path d="M26.500 21.500h10M27.500 27.500h9" stroke-width="1.100"/><path d="M40.500 11.500c3.500 1.500 5.200 5.500 4.200 9.500s-4.500 6.300-7.200 5s-2.800-5.200-.4-6.600s4.600.6 3.800 2.600"/></g>
 <!-- new doc -->
 <path d="M70.200 4.800h12.500l5 5v15.300h-17.500z" fill="url(#gdoc)" stroke="#8c8c90" stroke-width=".8"/><path d="M82.700 4.800v5h5" fill="#f4f4f4" stroke="#8c8c90" stroke-width=".7"/>
 <path d="M96.700 13.200h5l-2.500 2.800zM198 13.200h5l-2.500 2.800zM238.700 13.200h5l-2.500 2.800zM370.200 13.200h5l-2.500 2.800z" fill="#555"/>
 <!-- open -->
 <rect x="109.800" y="4.500" width="20.600" height="16.500" fill="#f4f4fa" stroke="#a4a4c4" stroke-width=".7"/><rect x="110.200" y="4.900" width="19.800" height="2.400" fill="#c4bce8"/>
 <path d="M118 16.500v-5.500h-2.600l5-4.800l5 4.800h-2.600v5.500z" fill="#1c3c8c"/>
 <path d="M113.500 15h6l1.500 1.600h10.800v9.400h-18.300z" fill="#e8a830"/><path d="M115.800 18h16.800l-1.500 8.200h-17.300z" fill="url(#gfold)" stroke="#d49820" stroke-width=".5"/>
 <!-- save -->
 <path d="M139.200 3.500h19.600l1.200 1.200v19.500h-20.800z" fill="#16161e"/><rect x="142.800" y="4" width="13.500" height="8.800" fill="#dcdce4"/><path d="M143.500 6h12M143.500 8h12M143.500 10h12" stroke="#b8b8c4" stroke-width=".6"/>
 <rect x="144.200" y="16.800" width="11.400" height="6.800" fill="#a4a4ac"/><rect x="146" y="17.800" width="3" height="5" fill="#16161e"/>
 <!-- undo / redo -->
 <path d="M170 12.500l9-8v4.800c6.500-.3 10.500 3.500 10.500 8.700c0 3-1.500 5.500-4.500 7.200c1.500-2.200 1.800-4.500.5-6.500c-1.400-2-3.800-2.800-6.500-2.600v4.600z" fill="url(#gundo)"/>
 <path d="M230.500 12.500l-9-8v4.800c-6.500-.3-10.500 3.500-10.500 8.700c0 3 1.500 5.500 4.500 7.200c-1.500-2.200-1.800-4.500-.5-6.500c1.400-2 3.800-2.800 6.500-2.600v4.600z" fill="url(#gundo)"/>
 <!-- cube -->
 <g stroke="#b4bcc4" stroke-width=".7"><path d="M252 7l13.500-4l6.500 3.500v14.500l-13 5.500l-7-4.500z" fill="#e8ecf0"/><path d="M252 7l7 3.500l13-4M259 10.500v16" fill="none"/><path d="M252 14.500l7 3l13-4" fill="none" opacity=".6"/></g>
 <!-- book -->
 <path d="M282.500 11l10 5.500v8.500l-10-5.500z" fill="#3c3c90"/><path d="M292.500 16.500l10.500-6.500v8.500l-10.500 6.500z" fill="#c8d8f0" stroke="#3c3c90" stroke-width=".8"/><path d="M292.500 16.500l-5-11l-2 8z" fill="#5454a8"/>
 <path d="M284.500 14l6 3.500v5l-6-3.500z" fill="#f0c020"/><path d="M284.500 17l6 2.500v3l-6-3.500z" fill="#40a040"/>
 <path d="M295 17.500l8-5M295 20.500l8-5M297.500 14v8.500M300.500 12.200v8.500" stroke="#8098c8" stroke-width=".5"/>
 <!-- camera -->
 <path d="M311.500 9l16-2.500l4.500 2v13l-5 3.500l-15.500-2.500z" fill="#c8ccd0" stroke="#7c8084" stroke-width=".7"/><path d="M316 7.500l5-1v2l-5 .8z" fill="#9ca0a4"/>
 <circle cx="320" cy="16.500" r="4.300" fill="#e8e8ec" stroke="#5c5c60" stroke-width=".8"/><circle cx="320" cy="16.500" r="2.400" fill="#1c1c24"/><circle cx="319.300" cy="15.700" r=".8" fill="#fff"/>
 <!-- lightning hand -->
 <g opacity=".8"><path d="M343 12c0-2 2-2 2 0l1 5l.5-9c0-2 2.200-2 2.200 0l.3 8l1-5c.4-1.500 2.200-1 2 .5l-.5 8.500c3 2 3 5-1 6.500h-5c-3-2-3-6-2.500-14.500z" fill="#f4e4d0" stroke="#e0c8a8" stroke-width=".5"/><path d="M354 3.500h8l-4.500 8h4.500l-10 13.500l3-10h-4z" fill="#f8ec90" stroke="#e8d870" stroke-width=".5"/></g>
 <!-- structure -->
 <g opacity=".85"><path d="M382 21.500l13-5h10l-12 5.500z" fill="#d0e0b8" stroke="#a8c090" stroke-width=".5"/><path d="M382 21.500v3l11 .5l12-5.500v-3l-12 5.500z" fill="#b8cca0"/><path d="M384 8l5-2.500v14l-5 2z" fill="#b4c0dc" stroke="#8c9cc0" stroke-width=".5"/><path d="M389 5.500l2 .8v13.500l-2-.3z" fill="#d4dcf0"/><rect x="397.500" y="9.500" width="2.600" height="9.500" fill="#f0a8b8" stroke="#d88898" stroke-width=".4"/></g>
 <!-- lock -->
 <path d="M418 13v-3.500c0-6.500 9.800-6.500 9.800 0v3.500" fill="none" stroke="#b8c8d8" stroke-width="2.200"/><rect x="414.800" y="12.800" width="16" height="12.800" rx="1.500" fill="#c0d0e0" stroke="#a8b8cc" stroke-width=".6"/><path d="M422.800 16v6.500" stroke="#e8f0f8" stroke-width="1.600"/>
 <!-- Si -->
 <text x="443" y="22.600" font-family="Liberation Sans, sans-serif" font-style="italic" font-size="22.500" fill="#3c2c80">Si</text>
 <!-- gear tools -->
 <g transform="translate(483.300,15)"><path d="M-2-11h4l.8 3l2.400 1l2.700-1.500l2.800 2.800l-1.500 2.700l1 2.400l3 .8v4l-3 .8l-1 2.400l1.500 2.700l-2.800 2.800l-2.700-1.500l-2.400 1l-.8 3h-4l-.8-3l-2.400-1l-2.700 1.500l-2.800-2.800l1.500-2.700l-1-2.400l-3-.8v-4l3-.8l1-2.400l-1.500-2.700l2.800-2.800l2.700 1.500l2.400-1z" fill="#d8dce0" stroke="#6c7074" stroke-width=".8"/><circle r="3.600" fill="#fff" stroke="#6c7074" stroke-width=".7"/>
 <path d="M-9-9l13 13" stroke="#4c4c50" stroke-width="2"/><path d="M3 3l7.500 7.500" stroke="#f0a818" stroke-width="3.400" stroke-linecap="round"/><path d="M8-9.500l-14 15" stroke="#9ca0a8" stroke-width="2"/><path d="M5.500-10.500c2.500-1.500 5-.5 5.500 1.500l-2.500.5l-1 2z" fill="#9ca0a8"/></g>
 <!-- Aa -->
 <text x="500.500" y="25" font-family="Liberation Serif, serif" font-size="14.500" fill="#eab0b8">Aa</text><text x="501" y="11.500" font-family="Liberation Serif, serif" font-size="7.500" fill="#b0b0b8">:,xx..</text>
 <path d="M544.800 11.300h5" stroke="#555" stroke-width="1"/><path d="M544.800 13.500h5l-2.500 2.800z" fill="#555"/>
 <!-- window controls -->
 <path d="M1799 14.300h10" stroke="#8a8a8a" stroke-width="1"/>
 <rect x="1844.500" y="11.300" width="7.300" height="7.300" rx="1.300" fill="none" stroke="#8a8a8a" stroke-width="1"/><path d="M1846.500 11.300v-.6c0-.8.500-1.300 1.300-1.300h4.700c.8 0 1.300.5 1.300 1.300v4.700c0 .8-.5 1.300-1.300 1.300h-.6" fill="none" stroke="#8a8a8a" stroke-width="1"/>
 <path d="M1890.300 9.300l9.600 9.600M1899.900 9.300l-9.600 9.600" stroke="#777" stroke-width="1"/>
 <!-- menu right -->
 <g fill="none" stroke="#fff" stroke-width="1"><path d="M1775 41.200l2.600 2.700l2.600-2.700M1824.800 41.200l2.600 2.700l2.600-2.700M1855 41.200l2.600 2.700l2.600-2.700"/></g>
 <text x="1839.500" y="48" font-family="Liberation Serif, serif" font-weight="bold" font-size="18" fill="#3c4c80">?</text>
 <path d="M1869.400 45h6.600" stroke="#8c94a0" stroke-width="1.700"/>
 <g fill="none" stroke="#8c94a0" stroke-width="1.200"><rect x="1887.500" y="40.300" width="6" height="4.700"/><path d="M1889.500 40.300v-1.600h6.200v4.700h-2.200"/></g>
 <path d="M1906.800 38.800l7.600 6.800M1914.400 38.800l-7.600 6.800" stroke="#9ca4b0" stroke-width="1.900"/>
</svg>
<!--/TITLE-->
<div id="ltool"><svg class="abs" style="left:4px;top:4px" width="18" height="4"><g fill="#222"><rect x="1" y="0" width="2" height="2"/><rect x="5" y="0" width="2" height="2"/><rect x="9" y="0" width="2" height="2"/><rect x="13" y="0" width="2" height="2"/></g><g fill="#fff"><rect x="2" y="2" width="2" height="1"/><rect x="6" y="2" width="2" height="1"/><rect x="10" y="2" width="2" height="1"/><rect x="14" y="2" width="2" height="1"/></g></svg></div>
<div id="main"></div>
<!--LSIDE--><svg class="abs" style="left:0;top:177px" width="27" height="742" viewBox="0 177 27 742">
 <defs>
  <radialGradient id="gball" cx=".4" cy=".35" r=".75"><stop offset="0" stop-color="#f4f6f8"/><stop offset="1" stop-color="#bcc4d0"/></radialGradient>
  <g id="ball"><circle r="6.600" fill="url(#gball)" stroke="#a4acbc" stroke-width=".8"/></g>
  <g id="tri"><path d="M-1.500-2.500l3 2.500l-3 2.500z" fill="#6c6c6c"/></g>
  <g id="sep"><path d="M6 0h14" stroke="#5c6068" stroke-width=".8"/><path d="M6 1h14" stroke="#fff" stroke-width="1"/></g>
  <g id="bp"><rect x="-3" y="-6" width="5.500" height="5.500" fill="none" stroke="#5c8cc8" stroke-width="1"/><rect x="-3" y="0" width="5.500" height="5.500" fill="none" stroke="#d8508c" stroke-width="1"/></g>
 </defs>
 <g opacity=".8">
 <path d="M13 190.500l2 4.500l5 .5l-3.800 3.200l1.300 5l-4.500-2.700l-4.500 2.700l1.300-5l-3.800-3.200l5-.5z" fill="none" stroke="#d86c74" stroke-width="1" stroke-dasharray="1.600 1.200"/>
 <use href="#ball" x="13.100" y="221.100"/><circle cx="13.100" cy="221.100" r="3" fill="#9cc494"/><path d="M13.100 214.500v3.500M13.100 224.200v3.500M6.500 221.100h3.500M16.200 221.100h3.500" stroke="#8ca0b4" stroke-width="1.200"/>
 <use href="#tri" x="13.500" y="237.400"/>
 <g fill="none" stroke-width=".9"><path d="M7 249.500h6.500M7 255.500h6.500M7 249.500v12M13.500 255.500v6M19.800 255.500v6" stroke="#7c94ac"/><rect x="13.500" y="249.500" width="6.300" height="6.300" stroke="#d85c64"/></g>
 <g fill="#f4d4d4" stroke="#d85c64" stroke-width=".7"><circle cx="13.500" cy="249.500" r="1.300"/><circle cx="19.800" cy="249.500" r="1.300"/><circle cx="13.500" cy="255.800" r="1.300"/><circle cx="19.800" cy="255.800" r="1.300"/></g><g fill="#c4e0b4" stroke="#6ca45c" stroke-width=".7"><circle cx="7" cy="249.500" r="1.300"/><circle cx="7" cy="255.500" r="1.300"/></g>
 <use href="#ball" x="13.100" y="278.200"/><path d="M7.500 278.200h11" stroke="#5c7890" stroke-width="1.600"/><circle cx="7" cy="278.200" r="1.700" fill="#a4d094" stroke="#6ca45c" stroke-width=".6"/><circle cx="19.200" cy="278.200" r="1.700" fill="#a4d094" stroke="#6ca45c" stroke-width=".6"/>
 <use href="#tri" x="13.500" y="294.700"/>
 <use href="#ball" x="13.100" y="311.500"/><path d="M10.800 305.500v12M15.400 305.500v12" stroke="#6c8094" stroke-width="1.500"/>
 <use href="#ball" x="13.100" y="333.400"/><path d="M7.200 331.200h11.800M7.200 335.600h11.800" stroke="#6c8094" stroke-width="1.500"/>
 <use href="#ball" x="13.100" y="356.100"/><circle cx="13.100" cy="356.100" r="2.600" fill="#9cc494"/><path d="M13.100 349.500v3.800M13.100 358.900v3.800M6.500 356.100h3.800M15.900 356.100h3.800" stroke="#6c8094" stroke-width="1.100"/>
 <use href="#ball" x="13.100" y="378.500"/><path d="M10.800 372.500v12M15.400 372.500v12M7 376.200h12.200M7 380.800h12.200" stroke="#6c8094" stroke-width="1.100"/>
 <use href="#tri" x="13.500" y="395.400"/>
 <use href="#ball" x="13.100" y="413.900"/><text x="7.300" y="418" font-family="Liberation Sans, sans-serif" font-weight="bold" font-size="10.500" fill="#8c94b0">EF</text>
 <use href="#tri" x="13.500" y="430.400"/>
 <use href="#ball" x="12.500" y="449.200"/><path d="M7.500 443.500l9.500 10.500" stroke="#7c8ca4" stroke-width="2.600"/><path d="M10 446.300l5 5.500" stroke="#e8d050" stroke-width="1.400"/><path d="M7.500 443.500l2.500 2.800" stroke="#d85c5c" stroke-width="1.600"/>
 <use href="#tri" x="13.500" y="465.700"/>
 <path d="M5.500 486.500l6-2.500h9l-6 3z" fill="#d4e0bc" stroke="#a4b88c" stroke-width=".5"/><path d="M5.500 486.500v2l9 .5l6-3v-2l-6 3z" fill="#b8c8a0"/><path d="M6.500 476.500l3-1.500v9.500l-3 1.500z" fill="#b4bcd8" stroke="#8c94b8" stroke-width=".5"/><rect x="15.500" y="478" width="1.800" height="7.500" fill="#e894a8"/>
 <path d="M5.500 499.500h15.500l-6.200 6.500v5.500h-3v-5.500z" fill="#d4dce4" stroke="#8c9cac" stroke-width=".8"/>
 <use href="#bp" x="10" y="527"/><path d="M15 521.500c4 1 4 9 0 10.500" fill="none" stroke="#6cb46c" stroke-width="1"/><path d="M16.800 520.200l-3 1.300l2.200 2zM16.800 533.200l-3-1.300l2.200-2z" fill="#6cb46c"/>
 <g fill="none" stroke="#7c94ac" stroke-width=".9"><path d="M7 544.500h12.500M7 551h12.500M7 544.500v12M13.300 544.500v12M19.500 544.500v12"/></g><path d="M9 547.500c1-4 7-5 9-1l1.500-1v4h-4l1.200-1.500c-1.500-2-5-1.500-5.700.5z" fill="#d84c54"/><g fill="#f4d4d4" stroke="#d85c64" stroke-width=".6"><circle cx="7" cy="544.500" r="1.200"/><circle cx="7" cy="551" r="1.200"/></g><g fill="#c4e0b4" stroke="#6ca45c" stroke-width=".6"><circle cx="19.500" cy="544.500" r="1.200"/><circle cx="19.500" cy="551" r="1.200"/></g>
 <path d="M12.500 563c0-1.500 2.200-1.500 2.200 0l.4 6c0 .6.800.8.800 1.800h-4.600c0-1 .8-1.200.8-1.800z" fill="#6c9c74" stroke="#4c7c5c" stroke-width=".4"/><path d="M10.800 571h5.600l1.200 6.500h-8z" fill="#b4bcc4" opacity=".9"/><path d="M11 572.500l-.6 5M12.500 572.500l-.3 5M14 572.500v5M15.500 572.500l.4 5" stroke="#e8ecf0" stroke-width=".6"/>
 <use href="#sep" y="585"/>
 <use href="#bp" x="11.500" y="600"/><path d="M5.500 594.500l10 7.500M17 594.500l-11 7.500" stroke="#7cb47c" stroke-width=".8"/>
 <path d="M6.500 613.500v12h11" fill="none" stroke="#6c7484" stroke-width=".9"/><path d="M5 615l1.500-2.500l1.500 2.500zM16 624l2.500 1.500l-2.500 1.500z" fill="#6c7484"/><use href="#bp" x="13.500" y="620.500"/><path d="M10.500 614.500l5.500 5.500M16 614.500l-5.500 5.500" stroke="#7cb47c" stroke-width=".7"/>
 <rect x="5.500" y="636.500" width="13" height="9.500" fill="#e4e8f0" stroke="#a4a8c4" stroke-width=".7"/><rect x="5.800" y="636.800" width="12.400" height="1.800" fill="#c4bce8"/><rect x="12.500" y="640" width="5.500" height="5.500" fill="none" stroke="#7cb47c" stroke-width=".9"/><rect x="13" y="646" width="5.500" height="5.500" fill="none" stroke="#d85c5c" stroke-width=".9"/><path d="M12.500 640l5.500 5.500M18 640l-5.500 5.500" stroke="#7cb47c" stroke-width=".7"/>
 <use href="#bp" x="12.500" y="666.500"/><path d="M6.500 662.500l12 9M19 662.500l-12.500 9" stroke="#7cb47c" stroke-width=".8"/>
 <rect x="11.500" y="686.500" width="6" height="6" fill="none" stroke="#d8508c" stroke-width="1"/><path d="M11.500 681.500l7.500 6M19 681.500l-6 5" stroke="#8cbcc4" stroke-width=".7"/><path d="M5.500 689.500l3.500 3.500l2.500-3.500h-2c0-4 3-6 6.500-5.500c-4-2.500-8.500 0-8.500 5.500z" fill="#7c7cc8"/>
 <g fill="none" stroke="#8c94a8" stroke-width=".9"><path d="M6.500 707.500v12M12.500 707.500v12M6.500 707.500h6M6.500 713h6M10 704.500v11M19.500 704.500v12M10 704.500h9.500M10 710h9.500M6.500 707.500l3.500-3M12.500 707.500l7-3M12.500 713l7-3M16 704.500v11"/></g>
 <g fill="none" stroke="#8c94a8" stroke-width=".9"><path d="M6.500 729v12M12.500 729v12M6.500 729h6M10 726v11M19.500 726v12M10 726h9.500M6.500 729l3.500-3M12.500 729l7-3M12.500 734.500l7-3M16 726v11"/></g><path d="M6 733h7M6 735.500h7M6.500 737.500l6-4" stroke="#e04c4c" stroke-width="1.100"/>
 <use href="#sep" y="748"/>
 <path d="M15.500 765l4 4" stroke="#7c8494" stroke-width="2.400" stroke-linecap="round"/><circle cx="11.500" cy="760.500" r="5" fill="#e0ecf4" stroke="#9cacbc" stroke-width="1.300"/>
 <path d="M15.500 787.500l4 4" stroke="#7c8494" stroke-width="2.400" stroke-linecap="round"/><circle cx="11.500" cy="783" r="5" fill="#e0ecf4" stroke="#9cacbc" stroke-width="1.300"/><path d="M11.500 782l6.500 6.500M18 782l-6.500 6.500" stroke="#e04c5c" stroke-width="1.700"/>
 <use href="#sep" y="799.500"/>
 <path d="M6 808.500l4-2.500l6 7l-4 3z" fill="#8c8c94"/><path d="M12 816l4-3l4.500 3.500c1 2 0 5-2.500 6s-5 0-6-2z" fill="#f0dc50"/><path d="M12.500 818.500l6.500-1.500c1 1.500.5 4-1.500 5s-4 0-5-1.500z" fill="#e86c4c" opacity=".8"/>
 <text x="9" y="841" font-family="Liberation Serif, serif" font-style="italic" font-size="14" fill="#7c849c">L</text><path d="M7 843.500h12" stroke="#7c849c" stroke-width=".8" stroke-dasharray="1.200 1"/><circle cx="6" cy="843.500" r="1.200" fill="#c4e0b4" stroke="#6ca45c" stroke-width=".6"/><circle cx="20" cy="843.500" r="1.200" fill="#c4e0b4" stroke="#6ca45c" stroke-width=".6"/>
 <use href="#tri" x="13" y="852"/>
 <path d="M5 879l1.500-4.500l11-10.500l3 3l-11 10.500z" fill="#f0cc50" stroke="#c8a030" stroke-width=".5"/><path d="M17.500 864l1-1c1-1 4 2 3 3l-1 1z" fill="#e88c8c"/><path d="M5 879l1.500-4.500l3 3z" fill="#f4e4c4"/>
 <g transform="translate(11.500,892)"><path d="M-1.200-6.500h2.400l.5 1.700l1.400.6l1.500-.9l1.700 1.700l-.9 1.500l.6 1.400l1.700.5v2.400l-1.700.5l-.6 1.400l.9 1.500l-1.700 1.700l-1.500-.9l-1.400.6l-.5 1.700h-2.400l-.5-1.700l-1.400-.6l-1.500.9l-1.700-1.700l.9-1.500l-.6-1.400l-1.700-.5v-2.400l1.700-.5l.6-1.400l-.9-1.500l1.700-1.700l1.500.9l1.400-.6z" fill="none" stroke="#7c8490" stroke-width=".9"/><circle r="2.300" fill="none" stroke="#7c8490" stroke-width=".9"/></g>
 <path d="M9 903l1-3l9-8.500l2 2l-9 8.500z" fill="#f0cc70" stroke="#c8a040" stroke-width=".4"/>
 </g>
</svg>
<div class="abs" style="left:1px;top:905px;width:25px;height:13px;border-radius:0 0 6px 6px;background:linear-gradient(90deg,#5a626e,#7a828e 50%,#a8b0bc)"></div>
<svg class="abs" style="left:15px;top:907px" width="10" height="9" viewBox="0 0 10 9"><path d="M1.500 1v6.500" stroke="#fff" stroke-width="1.300"/><path d="M4 1l4.500 3.200l-4.500 3.300z" fill="#fff"/><path d="M4 7.500l4.500-3.300" stroke="#444" stroke-width=".8"/></svg>
<!--/LSIDE-->
<!--RSIDE--><div class="rtool" style="top:177px;height:285px;border-radius:4px 0 6px 6px"></div>
<div class="abs" style="left:1895px;top:450.500px;width:24px;height:11.500px;border-radius:0 0 6px 6px;background:linear-gradient(90deg,#5a626e,#7a828e 50%,#a8b0bc)"></div>
<div class="rtool" style="top:466px;height:221px;border-radius:4px 0 6px 6px"></div>
<div class="abs" style="left:1895px;top:674px;width:24px;height:13px;border-radius:0 0 6px 6px;background:linear-gradient(90deg,#5a626e,#7a828e 50%,#a8b0bc)"></div>
<div class="abs" style="left:1896.500px;top:209.500px;width:21px;height:21px;border:1px solid #f4f8f8;border-radius:3px;background:linear-gradient(#dfe7e7 0,#dfe7e7 48%,#ccd4d6 50%,#d8e0e0 100%);box-shadow:0 0 0 .6px #8c949c"></div>
<div class="abs" style="left:1896.500px;top:476.500px;width:21px;height:21px;border:1px solid #f4f8f8;border-radius:3px;background:linear-gradient(#dfe7e7 0,#dfe7e7 48%,#ccd4d6 50%,#d8e0e0 100%);box-shadow:0 0 0 .6px #8c949c"></div>
<svg class="abs" style="left:1893px;top:177px" width="27" height="512" viewBox="1893 177 27 512">
 <defs>
  <g id="tri2"><path d="M-1.500-2.500l3 2.500l-3 2.500z" fill="#6c6c6c"/></g>
  <linearGradient id="gcube" x1="0" y1="0" x2="1" y2="1"><stop offset="0" stop-color="#eef2f6"/><stop offset="1" stop-color="#b4c0cc"/></linearGradient>
  <g id="cube"><path d="M-5-3l3-2.500h8.500v8l-3 3h-8.500z" fill="url(#gcube)" stroke="#7c8894" stroke-width=".8"/><path d="M-5-3h8.500v8.500M3.500-3l3-2.500" fill="none" stroke="#7c8894" stroke-width=".8"/></g>
  <g id="ax2"><path d="M0 0v-11.500" stroke-width="1.100" fill="none"/><path d="M-2-9.500l2-3.500l2 3.500z" stroke="none"/></g>
 </defs>
 <g fill="#222"><rect x="1899.500" y="181.500" width="2" height="2"/><rect x="1903.500" y="181.500" width="2" height="2"/><rect x="1907.500" y="181.500" width="2" height="2"/><rect x="1911.500" y="181.500" width="2" height="2"/><rect x="1899.500" y="470.500" width="2" height="2"/><rect x="1903.500" y="470.500" width="2" height="2"/><rect x="1907.500" y="470.500" width="2" height="2"/><rect x="1911.500" y="470.500" width="2" height="2"/></g>
 <g fill="#fff"><rect x="1900.500" y="183.500" width="2" height="1"/><rect x="1904.500" y="183.500" width="2" height="1"/><rect x="1908.500" y="183.500" width="2" height="1"/><rect x="1912.500" y="183.500" width="2" height="1"/><rect x="1900.500" y="472.500" width="2" height="1"/><rect x="1904.500" y="472.500" width="2" height="1"/><rect x="1908.500" y="472.500" width="2" height="1"/><rect x="1912.500" y="472.500" width="2" height="1"/></g>
 <g opacity=".85">
 <!-- 3d axes -->
 <g stroke="#e0707c" fill="#e0707c"><use href="#ax2" x="1901.400" y="203"/></g>
 <path d="M1901.400 203h11" stroke="#5cac7c" stroke-width="1.100"/><path d="M1911.500 201l3.500 2l-3.500 2z" fill="#5cac7c"/>
 <path d="M1901.400 203l9-9" stroke="#7c7cc4" stroke-width="1.100"/><path d="M1908 193.500l4.500-1.500l-1.500 4.500z" fill="#7c7cc4"/>
 <!-- selected -->
 <g stroke="#e0707c" fill="#e0707c"><use href="#ax2" x="1907.300" y="225.500"/></g>
 <path d="M1907.300 225.500l-6-3" stroke="#8c8ccc" stroke-width="1.100"/><path d="M1903.200 221.500l-3.800-.3l2.400 3z" fill="#8c8ccc"/>
 <path d="M1907.300 225.500l6-3" stroke="#6cb48c" stroke-width="1.100"/><path d="M1911.400 221.500l3.800-.3l-2.400 3z" fill="#6cb48c"/>
 <!-- XZ -->
 <g stroke="#e0707c" fill="#e0707c"><use href="#ax2" x="1901.400" y="248.400"/></g><path d="M1901.400 248.400h11" stroke="#5cac7c" stroke-width="1.100"/><path d="M1911.500 246.400l3.500 2l-3.500 2z" fill="#5cac7c"/><circle cx="1901.400" cy="248.400" r="1.700" fill="#8c8ccc"/>
 <text x="1904.300" y="245" font-family="Liberation Sans, sans-serif" font-size="8.500" fill="#8c949c">XZ</text>
 <use href="#tri2" x="1907.300" y="259.300"/>
 <!-- XY -->
 <g stroke="#7c7cc4" fill="#7c7cc4"><use href="#ax2" x="1901.400" y="283.400"/></g><path d="M1901.400 283.400h11" stroke="#5cac7c" stroke-width="1.100"/><path d="M1911.500 281.400l3.500 2l-3.500 2z" fill="#5cac7c"/><circle cx="1901.400" cy="283.400" r="1.700" fill="#e0707c"/>
 <text x="1904.300" y="280" font-family="Liberation Sans, sans-serif" font-size="8.500" fill="#8c949c">XY</text>
 <use href="#tri2" x="1907.300" y="294.700"/>
 <!-- YZ -->
 <g stroke="#e0707c" fill="#e0707c"><use href="#ax2" x="1901.400" y="318.300"/></g><path d="M1901.400 318.300h11" stroke="#7c7cc4" stroke-width="1.100"/><path d="M1911.500 316.300l3.500 2l-3.500 2z" fill="#7c7cc4"/><circle cx="1901.400" cy="318.300" r="1.700" fill="#5cac7c"/>
 <text x="1904.300" y="315" font-family="Liberation Sans, sans-serif" font-size="8.500" fill="#8c949c">YZ</text>
 <use href="#tri2" x="1907.300" y="329.500"/>
 <!-- YX -->
 <g stroke="#5cac7c" fill="#5cac7c"><use href="#ax2" x="1912.700" y="353.100"/></g><path d="M1912.700 353.100h-11" stroke="#7c7cc4" stroke-width="1.100"/><path d="M1902.600 351.100l-3.500 2l3.500 2z" fill="#7c7cc4"/><circle cx="1912.700" cy="353.100" r="1.700" fill="#e0707c"/>
 <text x="1899" y="350" font-family="Liberation Sans, sans-serif" font-size="8.500" fill="#e0707c">YX</text>
 <use href="#tri2" x="1907.300" y="364"/>
 <!-- persp grid -->
 <rect x="1898.500" y="376.500" width="17" height="12" fill="#ccd4d8" opacity=".6"/>
 <g fill="none" stroke="#9ca4b4" stroke-width=".9"><path d="M1901 387l4-8h9l-4 8zM1903 383h9M1905.500 387l4-8"/></g>
 <!-- rotate -->
 <path d="M1903 399.500a5.500 5.500 0 1 0 6.500-1.300" fill="none" stroke="#8c94b0" stroke-width="2"/><path d="M1900.200 400l2.300-4.500l3.200 4z" fill="#8c94b0"/>
 <use href="#tri2" x="1907.300" y="421.400"/>
 <!-- red axes -->
 <g stroke="#e0707c" fill="#e0707c"><use href="#ax2" x="1901.400" y="443.300"/></g><path d="M1901.400 443.300h11" stroke="#e0707c" stroke-width="1.100"/><path d="M1911.500 441.300l3.500 2l-3.500 2z" fill="#e0707c"/><path d="M1901.400 443.300l8.500-8.500" stroke="#e0707c" stroke-width="1.100"/><path d="M1907.500 434.300l4.500-1.500l-1.500 4.500z" fill="#e0707c"/>
 <!-- cubes -->
 <use href="#cube" x="1906.500" y="487.500"/>
 <use href="#cube" x="1906.500" y="510.500"/><path d="M1901.500 505l3-2.500h8.500l-3 2.500z" fill="none" stroke="#e06c6c" stroke-width=".9"/>
 <use href="#cube" x="1905.500" y="532.500"/><rect x="1908.500" y="524.500" width="8" height="8" fill="none" stroke="#5cace0" stroke-width="1"/>
 <use href="#cube" x="1907" y="553.500"/><path d="M1901 551l2.500-2.500v8l-2.500 2.500z" fill="none" stroke="#6cb46c" stroke-width=".9"/>
 <use href="#cube" x="1906.500" y="575.500"/><path d="M1899 570.500v-3h3M1914 567.500h-3M1914 567.500v3M1899 580v3h3M1914 583h-3M1914 583v-3" fill="none" stroke="#e06c6c" stroke-width=".9"/><path d="M1911 567.500h3" stroke="#e06c6c" stroke-width=".9"/>
 <use href="#cube" x="1906" y="597.500"/><path d="M1913.500 593l2-2v8l-2 2.500z" fill="#d4ecd0" stroke="#6cb46c" stroke-width=".8"/>
 <use href="#cube" x="1908" y="617.500"/><rect x="1899.500" y="617" width="8.500" height="8.500" fill="#dce8f0" stroke="#5cace0" stroke-width="1"/>
 <use href="#cube" x="1906.500" y="640"/><path d="M1901.500 648l3-2.500h8.500l-3 2.500z" fill="none" stroke="#e06c6c" stroke-width=".9"/>
 <path d="M1906.500 656.500l6 3v6.500l-6 3.500l-6-3.500v-6.500z" fill="url(#gcube)" stroke="#8c98a8" stroke-width=".8"/><path d="M1900.500 659.500l6 3l6-3M1906.500 662.500v7" fill="none" stroke="#8c98a8" stroke-width=".8"/><path d="M1899.500 666l7 4.200" stroke="#e09c9c" stroke-width=".7"/><path d="M1913.500 666l-7 4.200" stroke="#9cc4e4" stroke-width=".7"/><path d="M1899.500 658.500l7-3.800" stroke="#9cd09c" stroke-width=".7"/>
 </g>
 <g fill="#fff"><path d="M1910 452.500v6.500h1.300v-6.500zM1912.500 452.500l4.500 3.200l-4.500 3.300z"/><path d="M1910 676.500v6.500h1.300v-6.500zM1912.500 676.500l4.500 3.200l-4.500 3.300z"/></g>
 <path d="M1912.500 459l4.500-3.300M1912.500 683l4.500-3.300" stroke="#444" stroke-width=".8"/>
</svg>
<!--/RSIDE-->
<div id="scale"><div class="abs" style="left:-1px;top:0;width:1865px;height:41px"><div class="abs" style="left:21px;top:3px;width:152px;height:20px;background:#0000a0"></div><div class="abs" style="left:173px;top:3px;width:152px;height:20px;background:#0000e0"></div><div class="abs" style="left:325px;top:3px;width:152px;height:20px;background:#0038ff"></div><div class="abs" style="left:477px;top:3px;width:152px;height:20px;background:#0088ff"></div><div class="abs" style="left:629px;top:3px;width:152px;height:20px;background:#00d8ff"></div><div class="abs" style="left:781px;top:3px;width:152px;height:20px;background:#2fffd0"></div><div class="abs" style="left:933px;top:3px;width:152px;height:20px;background:#7fff80"></div><div class="abs" style="left:1085px;top:3px;width:152px;height:20px;background:#c3ff3c"></div><div class="abs" style="left:1237px;top:3px;width:152px;height:20px;background:#ffe800"></div><div class="abs" style="left:1389px;top:3px;width:152px;height:20px;background:#ff9800"></div><div class="abs" style="left:1541px;top:3px;width:152px;height:20px;background:#ff4c00"></div><div class="abs" style="left:1693px;top:3px;width:152px;height:20px;background:#f80000"></div><div class="abs" style="left:21px;top:23px;width:1px;height:3px;background:#000"></div><div class="sl" style="left:20px">0.73882</div><div class="abs" style="left:173px;top:23px;width:1px;height:3px;background:#000"></div><div class="sl" style="left:163px">1517</div><div class="abs" style="left:325px;top:23px;width:1px;height:3px;background:#000"></div><div class="sl" style="left:315px">3033.2</div><div class="abs" style="left:477px;top:23px;width:1px;height:3px;background:#000"></div><div class="sl" style="left:467px">4549.4</div><div class="abs" style="left:629px;top:23px;width:1px;height:3px;background:#000"></div><div class="sl" style="left:619px">6065.6</div><div class="abs" style="left:781px;top:23px;width:1px;height:3px;background:#000"></div><div class="sl" style="left:771px">7581.9</div><div class="abs" style="left:933px;top:23px;width:1px;height:3px;background:#000"></div><div class="sl" style="left:923px">9098.1</div><div class="abs" style="left:1085px;top:23px;width:1px;height:3px;background:#000"></div><div class="sl" style="left:1075px">10614</div><div class="abs" style="left:1237px;top:23px;width:1px;height:3px;background:#000"></div><div class="sl" style="left:1227px">12131</div><div class="abs" style="left:1389px;top:23px;width:1px;height:3px;background:#000"></div><div class="sl" style="left:1379px">13647</div><div class="abs" style="left:1541px;top:23px;width:1px;height:3px;background:#000"></div><div class="sl" style="left:1531px">15163</div><div class="abs" style="left:1693px;top:23px;width:1px;height:3px;background:#000"></div><div class="sl" style="left:1683px">16679</div><div class="abs" style="left:1845px;top:23px;width:1px;height:3px;background:#000"></div><div class="sl" style="right:20px">18195</div></div></div>
<div id="frame"></div>
<div id="frame2"></div>
<div id="canvas">
<svg class="abs" style="left:0;top:0" width="1834" height="828" viewBox="35 226 1834 828" shape-rendering="crispEdges">
<g font-family="Liberation Sans, sans-serif" font-weight="bold" font-size="11" letter-spacing="0.7" fill="#008000">
<rect x="458.5" y="295.5" width="5" height="5" fill="#00b400" stroke="#000" stroke-width="1"/><text x="466.6" y="296.2">2</text>
<rect x="472.5" y="413.5" width="5" height="5" fill="#00b400" stroke="#000" stroke-width="1"/><text x="480.6" y="414.2">8</text>
<rect x="824.5" y="323.5" width="5" height="5" fill="#00b400" stroke="#000" stroke-width="1"/><text x="832.6" y="324.2">5</text>
<rect x="858.5" y="406.5" width="5" height="5" fill="#00b400" stroke="#000" stroke-width="1"/><text x="866.6" y="407.2">11</text>
<rect x="279.5" y="585.5" width="5" height="5" fill="#00b400" stroke="#000" stroke-width="1"/><text x="287.6" y="586.2">18</text>
<rect x="410.5" y="592.5" width="5" height="5" fill="#00b400" stroke="#000" stroke-width="1"/>
<rect x="410.5" y="688.5" width="5" height="5" fill="#00b400" stroke="#000" stroke-width="1"/>
<rect x="286.5" y="688.5" width="5" height="5" fill="#00b400" stroke="#000" stroke-width="1"/><text x="294.6" y="689.2">20</text>
<rect x="300.5" y="785.5" width="5" height="5" fill="#00b400" stroke="#000" stroke-width="1"/><text x="308.6" y="786.2">25</text>
<rect x="417.5" y="854.5" width="5" height="5" fill="#00b400" stroke="#000" stroke-width="1"/><text x="425.6" y="855.2">26</text>
<rect x="300.5" y="901.5" width="5" height="5" fill="#00b400" stroke="#000" stroke-width="1"/><text x="308.6" y="902.2">30</text>
<rect x="570.0" y="929.5" width="5" height="5" fill="#00b400" stroke="#000" stroke-width="1"/><text x="578.1" y="930.2">27</text>
<rect x="686.5" y="956.5" width="5" height="5" fill="#00b400" stroke="#000" stroke-width="1"/><text x="694.6" y="957.2">29</text>
<rect x="300.5" y="1012.0" width="5" height="5" fill="#00b400" stroke="#000" stroke-width="1"/><text x="308.6" y="1012.7">34</text>
<rect x="438.5" y="1012.0" width="5" height="5" fill="#00b400" stroke="#000" stroke-width="1"/><text x="446.6" y="1012.7">31</text>
<rect x="569.5" y="1040.0" width="5" height="5" fill="#00b400" stroke="#000" stroke-width="1"/><text x="577.6" y="1040.7">32</text>
<rect x="376.5" y="302.5" width="5" height="5" fill="#00b400" stroke="#000" stroke-width="1"/><text x="384.6" y="303.2">1</text>
<rect x="376.5" y="420.1" width="5" height="5" fill="#00b400" stroke="#000" stroke-width="1"/><text x="384.6" y="420.8">7</text>
<rect x="844.8" y="516.5" width="5" height="5" fill="#00b400" stroke="#000" stroke-width="1"/><text x="852.9" y="517.2">12</text>
<rect x="837.0" y="612.5" width="5" height="5" fill="#00b400" stroke="#000" stroke-width="1"/><text x="845.1" y="613.2">17</text>
<rect x="695.0" y="308.5" width="5" height="5" fill="#00b400" stroke="#000" stroke-width="1"/><text x="703.1" y="309.2">4</text>
</g>
<polygon fill="#f80000" points="406,423 555,423 555,437 728,437 728,473 729,473 729,521 732,521 732,640 734,640 734,648 735,648 735,762 425,762 425,704 416,704 416,523 406,523"/>
<polygon fill="#0038ff" points="288,262 383,270 383,361 378,361 378,418 405,418 405,494 347,494 347,496.5 288,496.5"/>
<polygon fill="#0038ff" points="554,286 703,299 703,433 554,433"/>
<polygon fill="#00d8ff" points="705,299 754,303 754,328 853,328 853,366 858,366 858,516.5 853,516.5 853,634.5 803,634.5 803,640 732,640 732,473 728,473 728,404 705,404"/>
<polygon fill="#ffe800" points="439,763 735,763 735,909 707,909 707,911 571,911 571,1008 292,1008 292,1002 289,1002 289,904 439,904"/>
<g fill="#fff"><rect x="469" y="699" width="5" height="3"/><rect x="526" y="701" width="1" height="1"/><rect x="528" y="701" width="1" height="1"/><rect x="585" y="701" width="1" height="1"/><rect x="588" y="701" width="1" height="1"/><rect x="645" y="701" width="1" height="1"/><rect x="647" y="701" width="1" height="1"/><rect x="685" y="701" width="1" height="1"/><rect x="733" y="698" width="2" height="3"/><polygon points="555,763 559.5,763 555,770"/><polygon points="576,763 582,763 582,776 580,776 579,768"/></g>
<rect x="582" y="763" width="2" height="13" fill="#0000a0"/>
</svg>
<div class="abs" style="left:2px;top:1px;font-size:11px;line-height:15px;white-space:nowrap">Мозаика объема вынутого грунта V(zY)<br>Единицы измерения - м3</div>
<svg class="abs" style="left:1108px;top:798px" width="32" height="32" viewBox="0 0 32 32" shape-rendering="crispEdges"><g stroke="#0000ff" stroke-width="1" fill="none"><line x1="0" y1="15.500" x2="10" y2="15.500"/><line x1="21" y1="15.500" x2="31" y2="15.500"/><line x1="15.500" y1="0" x2="15.500" y2="10"/><line x1="15.500" y1="21" x2="15.500" y2="31"/><rect x="10.500" y="10.500" width="10" height="10"/></g></svg>
</div>
<div class="vscroll"></div>
<div class="hscroll"></div>
<div id="dlg">
<div class="ttl"><span>Параметры нагрузки</span>
<svg class="abs" style="left:729px;top:9px" width="12" height="12" viewBox="0 0 12 12"><path d="M1 1L11 11M11 1L1 11" stroke="#000" stroke-width="1.1" fill="none"/></svg></div>
<div id="grid"><div class="c" style="left:1px;top:1px;width:38px;height:18.5px"></div><div class="c" style="left:40px;top:1px;width:136px;height:18.5px"></div><div class="c" style="left:177.5px;top:1px;width:119.0px;height:18.5px"></div><div class="c" style="left:298px;top:1px;width:111px;height:18.5px"></div><div class="c" style="left:410.5px;top:1px;width:101.5px;height:18.5px"></div><div class="c" style="left:513.5px;top:1px;width:160.5px;height:18.5px"></div><div class="abs" style="left:674px;top:1px;width:40px;height:18.5px;background:#f0f0f0"></div><div class="abs" style="left:714.5px;top:19.5px;width:16px;height:270px;background:#f0f0f0"></div><div class="abs" style="left:722px;top:17px;width:1.5px;height:17px;background:#7a7a7a"></div><div class="c" style="left:1px;top:20.6px;width:38px;height:20.4px"></div><div class="c" style="left:1px;top:42.3px;width:38px;height:15.2px"></div><div class="h" style="left:40px;top:20.6px;width:137px;height:37.4px">№ нагрузки<br>(n-i)</div><div class="h" style="left:177.5px;top:20.6px;width:120.0px;height:37.4px">Объем грунта<br>(котлована)</div><div class="h" style="left:298px;top:20.6px;width:112px;height:37.4px">Площадь<br>нагрузки</div><div class="h" style="left:410.5px;top:20.6px;width:102.5px;height:37.4px">Вес грунта<br>(котлована)</div><div class="h" style="left:513.5px;top:20.6px;width:161.5px;height:37.4px">Средняя нагрузка<br>(Pz)</div><div class="hl" style="top:58px"></div><div class="c" style="left:1px;top:59.5px;width:38px;height:15.4px"></div><div class="hl" style="top:75px"></div><div class="c" style="left:1px;top:76.5px;width:38px;height:15.4px"></div><div class="hl" style="top:92px"></div><div class="c" style="left:1px;top:93.5px;width:38px;height:15.4px"></div><div class="hl" style="top:109px"></div><div class="c" style="left:1px;top:111.6px;width:38px;height:15.4px"></div><div class="hl" style="top:126px"></div><div class="c" style="left:1px;top:127.5px;width:38px;height:15.4px"></div><div class="hl" style="top:143px"></div><div class="c" style="left:1px;top:144.5px;width:38px;height:15.4px"></div><div class="hl" style="top:160px"></div><div class="c" style="left:1px;top:161.5px;width:38px;height:15.4px"></div><div class="hl" style="top:177px"></div><div class="c" style="left:1px;top:178.5px;width:38px;height:15.4px"></div><div class="hl" style="top:194px"></div><div class="c" style="left:1px;top:195.5px;width:38px;height:15.4px"></div><div class="hl" style="top:211px"></div><div class="c" style="left:1px;top:212.5px;width:38px;height:15.4px"></div><div class="hl" style="top:228px"></div><div class="c" style="left:1px;top:229.5px;width:38px;height:15.4px"></div><div class="hl" style="top:245px"></div><div class="c" style="left:1px;top:246.5px;width:38px;height:15.4px"></div><div class="hl" style="top:262px"></div><div class="c" style="left:1px;top:263.5px;width:38px;height:15.4px"></div><div class="hl" style="top:279px"></div><div class="c" style="left:1px;top:280.5px;width:38px;height:15.4px"></div><div class="vl" style="left:176px"></div><div class="vl" style="left:297px"></div><div class="vl" style="left:409px"></div><div class="vl" style="left:512px"></div><div class="vl" style="left:674px"></div><div class="t" style="left:44.2px;top:58.8px">1 - 0</div><div class="t" style="left:181.4px;top:58.8px">4281.68</div><div class="t" style="left:302.4px;top:58.8px">481.12</div><div class="t" style="left:414.3px;top:58.8px">5507.19</div><div class="t" style="left:517.4px;top:58.8px">10.00</div><div class="t" style="left:44.2px;top:75.8px">2 - 0</div><div class="t" style="left:181.4px;top:75.8px">3788.52</div><div class="t" style="left:302.4px;top:75.8px">433.42</div><div class="t" style="left:414.3px;top:75.8px">4835.62</div><div class="t" style="left:517.4px;top:75.8px">38.74</div><div class="t" style="left:44.2px;top:92.8px">3 - 0</div><div class="t" style="left:181.4px;top:92.8px">6987.73</div><div class="t" style="left:302.4px;top:92.8px">870.02</div><div class="t" style="left:414.3px;top:92.8px">10849.12</div><div class="t" style="left:517.4px;top:92.8px">28.30</div><div class="t" style="left:44.2px;top:110.8px">4 - 0</div><div class="t" style="left:181.4px;top:109.8px">30759.43</div><div class="t" style="left:302.4px;top:109.8px">3713.32</div><div class="t" style="left:414.3px;top:109.8px">36568.18</div><div class="t" style="left:517.4px;top:109.8px">7.28</div></div>
<div id="gb"><div class="cap">Единицы измерения</div>
<div class="r" style="left:9px;top:13px">Объем:</div><div class="r" style="left:58px;top:13px">м<sup>3</sup></div>
<div class="r" style="left:11px;top:34px">Площадь:</div><div class="r" style="left:74px;top:34px">м<sup>2</sup></div>
<div class="r" style="left:11px;top:55px">Вес:</div><div class="r" style="left:44px;top:55px">т</div>
<div class="r" style="left:11px;top:74px">Средняя нагрузка:</div><div class="r" style="left:120px;top:74px">т</div>
</div>
<div id="helpb">?</div>
</div>
<div id="tabs">
  <div class="tab sel" style="left:3px;width:41px">План</div>
  <div class="tab" style="left:44px;width:82px"><span>Верхний грунт</span></div>
  <div class="tab" style="left:126px;width:37px"><span>Срез</span></div>
  <div class="tab" style="left:163px;width:50px"><span>Рельеф</span></div>
</div>
<div id="btool"></div>
<!--BOT--><div class="abs" style="left:120.500px;top:1104.500px;width:21px;height:20px;border:1px solid #f4f8f8;border-radius:3px;background:linear-gradient(#dfe7e7 0,#dfe7e7 48%,#ccd4d6 50%,#d8e0e0 100%);box-shadow:0 0 0 .6px #8c949c"></div>
<div class="abs" style="left:379px;top:1104.500px;width:20.500px;height:20px;border:1px solid #f4f8f8;border-radius:3px;background:linear-gradient(#dfe7e7 0,#dfe7e7 48%,#ccd4d6 50%,#d8e0e0 100%);box-shadow:0 0 0 .6px #8c949c"></div>
<div class="abs" style="left:497px;top:1102px;width:11.500px;height:25px;border-radius:0 6px 6px 0;background:linear-gradient(#5a626e,#7a828e 50%,#a0a8b4)"></div>
<svg class="abs" style="left:0;top:1101px" width="512" height="28" viewBox="0 1101 512 28">
 <defs>
  <g id="gear"><path d="M-1.200-6.500h2.400l.5 1.700l1.400.6l1.500-.9l1.700 1.700l-.9 1.500l.6 1.400l1.700.5v2.400l-1.700.5l-.6 1.400l.9 1.500l-1.700 1.700l-1.500-.9l-1.400.6l-.5 1.700h-2.400l-.5-1.700l-1.400-.6l-1.500.9l-1.700-1.700l.9-1.500l-.6-1.400l-1.700-.5v-2.400l1.700-.5l.6-1.400l-.9-1.500l1.700-1.700l1.500.9l1.400-.6z" fill="none" stroke="#8c94a0" stroke-width="1"/><circle r="2.400" fill="none" stroke="#8c94a0" stroke-width="1"/></g>
  <g id="pen"><path d="M-5 5l1-3l8.500-8l2 2l-8.500 8z" fill="#ecd08c" stroke="#c8a860" stroke-width=".4"/></g>
  <g id="cbar"><rect x="0" y="0" width="2.600" height="3.700" fill="#e87c6c"/><rect x="0" y="3.700" width="2.600" height="3.700" fill="#f0b060"/><rect x="0" y="7.400" width="2.600" height="3.700" fill="#f0e060"/></g>
  <g id="bsep"><path d="M0 1107.500v13" stroke="#4c5058" stroke-width="1"/><path d="M1 1107.500v13" stroke="#e8ecf0" stroke-width="1"/></g>
  <g id="grn"><path d="M-6 0l4.500-3.500v2.200c4-.5 7 2 7 5.300c0 1.800-.8 3.300-2.300 4.400c.8-3-.8-5.500-4.700-5.200v2.300z" fill="#7cb87c" stroke="#5c9c64" stroke-width=".4"/><path d="M-.2-4h2.400v9h1.800l-3 4l-3-4h1.800z" fill="#9c8cc8" stroke="#7c6cb0" stroke-width=".4"/></g>
 </defs>
 <g fill="#222"><rect x="4" y="1107.500" width="2" height="2"/><rect x="4" y="1111.500" width="2" height="2"/><rect x="4" y="1115.500" width="2" height="2"/><rect x="4" y="1119.500" width="2" height="2"/></g><g fill="#fff"><rect x="5" y="1109.500" width="2" height="1"/><rect x="5" y="1113.500" width="2" height="1"/><rect x="5" y="1117.500" width="2" height="1"/><rect x="5" y="1121.500" width="2" height="1"/></g>
 <g opacity=".8">
 <use href="#gear" x="20" y="1114"/><use href="#pen" x="22.500" y="1116"/><path d="M15 1119c2 3 7 3.500 10 1" fill="none" stroke="#7c9cc4" stroke-width="1"/>
 <use href="#gear" x="42.500" y="1113.500"/><use href="#pen" x="45" y="1116"/>
 <path d="M60 1107v12" stroke="#7c8cc4" stroke-width="1.300"/><path d="M57.500 1117l2.500 4l2.500-4z" fill="#7c8cc4"/><text x="62" y="1113" font-family="Liberation Sans, sans-serif" font-size="7" fill="#7c8494">12</text><path d="M63.500 1114l7 7M70.500 1114l-7 7" stroke="#e06c7c" stroke-width="1.400"/>
 <rect x="79.500" y="1107" width="6.500" height="7" fill="#e87878"/><rect x="79.500" y="1114" width="6.500" height="7" fill="#6cb4e0"/><text x="80.500" y="1113" font-family="Liberation Sans, sans-serif" font-weight="bold" font-size="6.500" fill="#fff">2</text><text x="80.500" y="1120.200" font-family="Liberation Sans, sans-serif" font-weight="bold" font-size="6.500" fill="#fff">B</text><path d="M87.500 1107.500h6.500v13h-6.500M87.500 1114h6.500" fill="none" stroke="#7c8490" stroke-width=".9"/>
 <path d="M102 1108l13 13M102 1115h13" stroke="#e0707c" stroke-width=".8" stroke-dasharray="1.500 1"/><text x="108" y="1112" font-family="Liberation Sans, sans-serif" font-size="6" fill="#8c949c">1.2</text><text x="101" y="1122" font-family="Liberation Sans, sans-serif" font-size="6" fill="#8c949c">1.2</text><g fill="#c4e0b4" stroke="#6ca45c" stroke-width=".5"><circle cx="102.500" cy="1115" r="1.100"/><circle cx="114.500" cy="1115" r="1.100"/></g>
 </g>
 <use href="#grn" x="131.500" y="1112"/>
 <g opacity=".75"><use href="#grn" x="155" y="1112"/><text x="147" y="1121" font-family="Liberation Serif, serif" font-size="7" fill="#8c94a0">1</text></g>
 <use href="#bsep" x="167.500"/>
 <g opacity=".8">
 <use href="#cbar" x="175" y="1108"/><text x="178" y="1116" font-family="Liberation Sans, sans-serif" font-weight="bold" font-size="9.500" fill="#9ca4b4">EF</text><circle cx="179.500" cy="1120" r="2.300" fill="none" stroke="#8c94a8" stroke-width="1"/><path d="M184 1120.500h6M187 1117.500v6" stroke="#6c8cd0" stroke-width="1.400"/>
 <use href="#cbar" x="196.500" y="1108"/><path d="M201 1112l4-3h8v8l-4 3.500h-8z" fill="#b4d4c4" stroke="#8cac9c" stroke-width=".6"/><path d="M201 1112h8l4-3M209 1112v8.500" fill="none" stroke="#8cac9c" stroke-width=".6"/><path d="M202 1119l3-3.500M205 1120l3-3.500M202.500 1122.500l5-1.500" stroke="#e06c6c" stroke-width=".8"/>
 <use href="#cbar" x="219" y="1108"/><path d="M223.500 1110l9-2v2l-3.500 1v7l3.500 1v2l-9 1v-2l3-.5v-7l-3-1z" fill="#a4acbc" stroke="#848c9c" stroke-width=".5"/>
 <use href="#cbar" x="241" y="1108" /><g fill="#e8c8a0" stroke="#c8a880" stroke-width=".5"><rect x="244.500" y="1109" width="7" height="3.300"/><rect x="252" y="1109" width="6.500" height="3.300"/><rect x="244.500" y="1112.800" width="4" height="3.300"/><rect x="249" y="1112.800" width="7" height="3.300"/><rect x="244.500" y="1116.600" width="7" height="3.300"/><rect x="252" y="1116.600" width="6.500" height="3.300"/></g>
 </g>
 <use href="#bsep" x="263"/>
 <g opacity=".8">
 <path d="M272 1108.500l10-1.500v2l-3.500.8v8.400l3.500.8v2l-10 1v-2l3.500-.5v-8l-3.500-.5z" fill="#b4bcc8" stroke="#8c94a4" stroke-width=".6"/>
 <path d="M294 1119l9-9h4v3l-9 9h-4z" fill="#c4ccd8" stroke="#949cac" stroke-width=".7"/><path d="M294 1119h4l9-9M298 1119v3" fill="none" stroke="#949cac" stroke-width=".7"/>
 <path d="M315 1110l5-3h9v4l-4 2v9h-4v-9h-6z" fill="#bcc4d4" stroke="#8490a8" stroke-width=".7"/><path d="M315 1110h10l4-3M325 1110v3" fill="none" stroke="#8490a8" stroke-width=".7"/>
 <path d="M337 1117l5-3.500h9l-5 3.500z" fill="#dce4ec" stroke="#a4acbc" stroke-width=".5"/><path d="M337 1117h9v4h-9z" fill="#e8ecf0" stroke="#a4acbc" stroke-width=".5"/><path d="M346 1117l5-3.500v4l-5 3.500z" fill="#f0c050"/><path d="M342 1110l5-2h4l-5 2.500z" fill="#6cb4e0"/>
 <path d="M359.500 1121l4.500-13h10l-4.500 13z" fill="#e4e8ec" stroke="#848c9c" stroke-width=".9"/>
 </g>
 <path d="M381.500 1121l4.500-13h10.500l-4.500 13z" fill="#eef0f8" stroke="#a4a4d0" stroke-width=".8"/><path d="M384 1121l4.500-13M386.800 1121l4.500-13M389.500 1121l4.500-13M383 1117h10.500M384.300 1113h10.500" stroke="#a4a4d0" stroke-width=".6"/>
 <use href="#bsep" x="403"/>
 <g opacity=".8">
 <rect x="412" y="1109" width="5.500" height="5.500" fill="#f0b060"/><rect x="412" y="1114.500" width="5.500" height="5.500" fill="#e06c5c"/><rect x="417.500" y="1114.500" width="5.500" height="5.500" fill="#f0c870"/><path d="M420 1108c4 0 6.500 3 6 7l1.500-.5l-2.500 3.500l-2.500-3.500l1.700.3c.3-3-1.200-5-4.200-5z" fill="#8c94a8"/><path d="M426 1120.500h-3" stroke="#8c94a8" stroke-width="1"/>
 <text x="433" y="1122" font-family="Liberation Serif, serif" font-size="13" fill="#7c8cb0">Σ</text><path d="M441 1108c4 0 6.500 3 6 7l1.500-.5l-2.500 3.500l-2.500-3.500l1.700.3c.3-3-1.200-5-4.200-5z" fill="#8cbc8c"/><path d="M438 1112c2-3 5-3 7-2" fill="none" stroke="#8cbc8c" stroke-width="1"/>
 <path d="M455 1121.500v-13" stroke="#e07078" stroke-width="1"/><path d="M453.300 1110l1.700-3l1.700 3z" fill="#e07078"/><path d="M455 1121.500h13" stroke="#6cb47c" stroke-width="1"/><path d="M466.500 1119.800l3 1.700l-3 1.700z" fill="#6cb47c"/><circle cx="462.500" cy="1114.500" r="4.500" fill="none" stroke="#8c94a8" stroke-width="1.100"/><path d="M458 1118.500l8-8" stroke="#8c94a8" stroke-width=".8"/>
 <rect x="477.500" y="1108.500" width="7" height="6" fill="none" stroke="#e07078" stroke-width=".9"/><rect x="477.500" y="1114.500" width="7" height="6" fill="none" stroke="#e07078" stroke-width=".9"/><path d="M477.500 1108.500l7 6" stroke="#6cb47c" stroke-width=".8"/><path d="M486 1108c4 0 6.500 3 6 7l1.500-.5l-2.500 3.500l-2.500-3.500l1.700.3c.3-3-1.200-5-4.200-5z" fill="#8c94a8"/><path d="M492 1120.500h-4" stroke="#8c94a8" stroke-width="1"/>
 </g>
 <path d="M500.500 1119h6" stroke="#fff" stroke-width="1.200"/><path d="M500.500 1121l5.500 0l-2.700 3z" fill="#fff"/><path d="M506 1121l-2.700 3" stroke="#444" stroke-width=".7"/>
</svg>
<!--/BOT-->
</body>
</html>
